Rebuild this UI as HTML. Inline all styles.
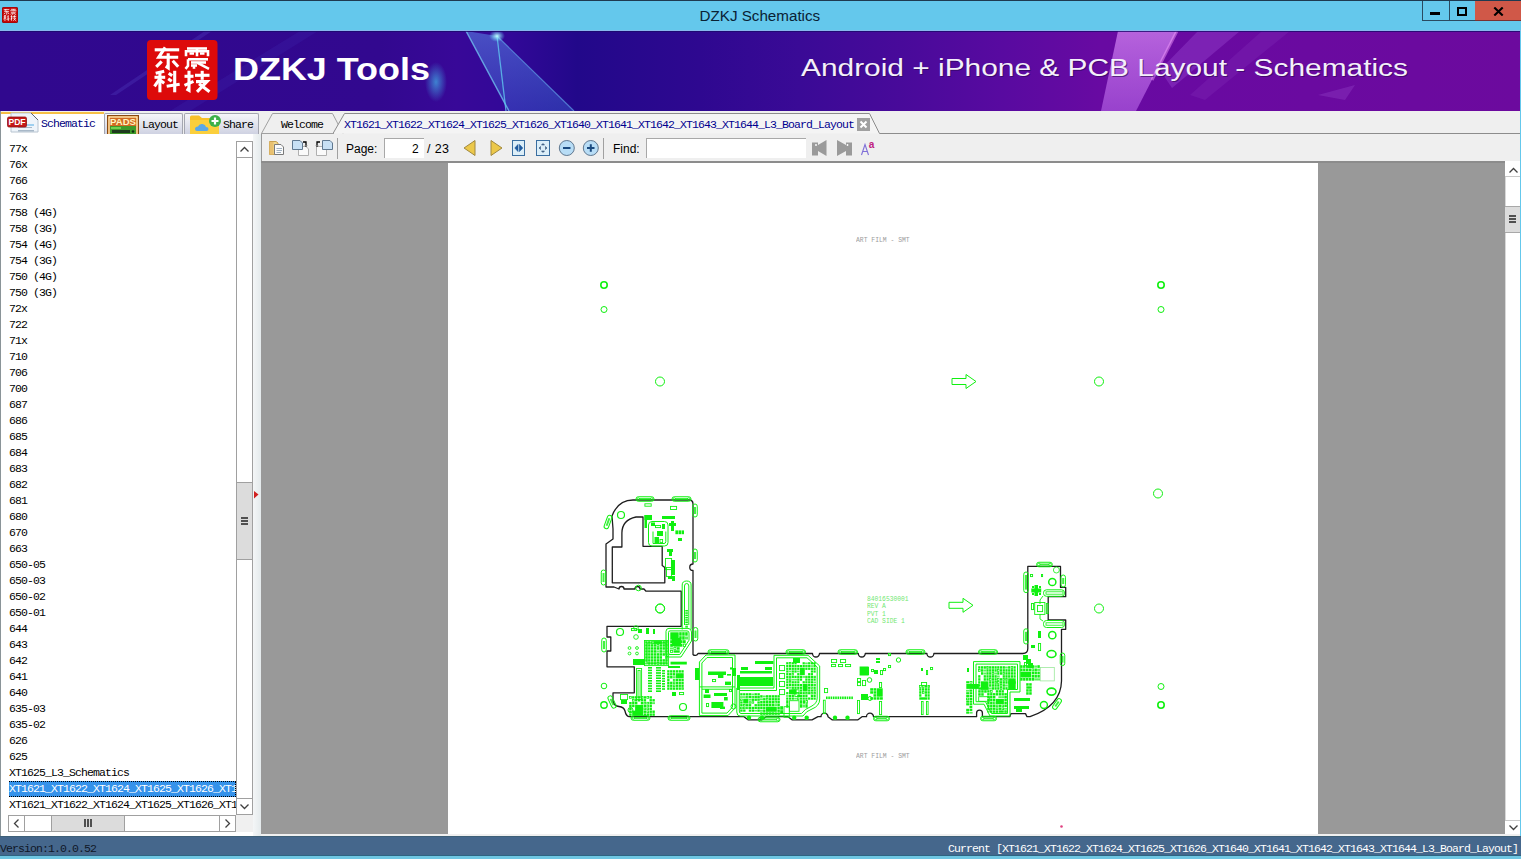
<!DOCTYPE html>
<html><head><meta charset="utf-8">
<style>
*{margin:0;padding:0;box-sizing:border-box}
html,body{width:1521px;height:859px;overflow:hidden;background:#f0f0f0;font-family:"Liberation Sans",sans-serif}
.a{position:absolute}
.mono{font-family:"Liberation Mono",monospace;font-size:11.5px;letter-spacing:-0.9px;white-space:pre;line-height:16px}
</style></head><body>
<!-- title bar -->
<div class="a" style="left:0;top:0;width:1521px;height:31px;background:#64c8ec;border-top:1px solid #1e3a50"></div>
<div class="a" style="left:699.5px;top:6.5px;font-size:15.2px;color:#0a2234;white-space:pre">DZKJ Schematics</div>
<div class="a" style="left:0;top:30px;width:1521px;height:1px;background:#88b8ee"></div>
<!-- app icon -->
<svg class="a" style="left:2px;top:7px" width="16" height="16" viewBox="147 40 70.5 60" preserveAspectRatio="none"><rect x="147" y="40" width="70.5" height="60" rx="10" fill="#c40a0a" stroke="#800000" stroke-width="3"/>
<g fill="none" stroke="#fff" stroke-width="3.1" stroke-linecap="butt" stroke-linejoin="miter">
<g transform="translate(153.7,47.3)">
<path d="M1 2.5 H25.5"/><path d="M11.5 0 L5 10 H24.5"/><path d="M14.5 6 V20.5 L12 18.8"/><path d="M8 14 L2.5 19.5"/><path d="M19 13.5 L24.5 19.5"/>
</g>
<g transform="translate(184,47.3)" stroke-width="2.6">
<path d="M3 1.2 H23"/><path d="M2 9 V4 H24 V9"/><path d="M13 1 V9"/><path d="M5.5 6.2 H10 M16 6.2 H20.5"/>
<path d="M4 12 H24"/><path d="M4 12 V18.5 L1.5 21.5"/><path d="M7 15.2 H22"/><path d="M7 18.2 H13"/><path d="M10 18 V21.5"/><path d="M13.5 15.5 L25 21.5"/>
</g>
<g transform="translate(153.7,70.8)">
<path d="M2 2.5 L10.5 0.5"/><path d="M0.8 6.5 H11.5"/><path d="M6.2 1.5 V21.5"/><path d="M6 8 L0.8 15.5"/><path d="M6.5 9.5 L10.5 12.5"/>
<path d="M15 2.5 L18.5 5"/><path d="M14.5 8 L18 10.5"/><path d="M13 15.5 L26 13.5"/><path d="M21 0 V21.5"/>
</g>
<g transform="translate(184,70.8)">
<path d="M0.5 5.5 H9.5"/><path d="M5 0 V19.5 L2.5 18"/><path d="M0.5 14.5 L9.5 10.5"/>
<path d="M11 4.5 H25.5"/><path d="M18.2 0 V9"/><path d="M12 10.8 H23 L13 21"/><path d="M15 13 L25.5 21"/>
</g>
</g>
</svg>
<!-- window buttons -->
<div class="a" style="left:1422px;top:1px;width:27px;height:20px;border:1px solid #2a4a60;border-top:none;border-right:none"></div>
<div class="a" style="left:1430px;top:12px;width:10px;height:3px;background:#000"></div>
<div class="a" style="left:1449px;top:1px;width:26px;height:20px;border:1px solid #2a4a60;border-top:none;border-right:none"></div>
<div class="a" style="left:1457px;top:7px;width:10px;height:9px;border:2px solid #000"></div>
<div class="a" style="left:1475px;top:1px;width:46px;height:20px;background:#d05848;border-bottom:1px solid #7a3030"></div>
<svg class="a" style="left:1493px;top:7px" width="11" height="9" viewBox="0 0 11 9"><path d="M1.3 0.5 L9.7 8.5 M9.7 0.5 L1.3 8.5" stroke="#000" stroke-width="2.1"/></svg>

<!-- banner -->
<svg id="banner" class="a" style="left:0;top:31px" width="1520" height="80" viewBox="0 31 1520 80">
<defs>
<linearGradient id="bg" x1="0" x2="1" y1="0" y2="0">
<stop offset="0" stop-color="#30088e"/><stop offset="0.25" stop-color="#32088f"/><stop offset="0.30" stop-color="#380898"/><stop offset="0.335" stop-color="#320898"/>
<stop offset="0.38" stop-color="#22088a"/><stop offset="0.46" stop-color="#2e0890"/>
<stop offset="0.526" stop-color="#3a0a96"/><stop offset="0.592" stop-color="#480a9a"/>
<stop offset="0.658" stop-color="#580aa0"/><stop offset="0.724" stop-color="#680aa2"/>
<stop offset="1" stop-color="#6c0a9e"/>
</linearGradient>
<linearGradient id="beam" x1="0" x2="0" y1="0" y2="1">
<stop offset="0" stop-color="#5a8ae8" stop-opacity="0.55"/><stop offset="1" stop-color="#3a60d0" stop-opacity="0.45"/>
</linearGradient>
<radialGradient id="glow"><stop offset="0" stop-color="#40a0e0" stop-opacity="0.8"/><stop offset="1" stop-color="#40a0e0" stop-opacity="0"/></radialGradient>
<radialGradient id="spark"><stop offset="0" stop-color="#c0ffff" stop-opacity="1"/><stop offset="1" stop-color="#60e0ff" stop-opacity="0"/></radialGradient>
</defs>
<rect x="0" y="31" width="1520" height="80" fill="url(#bg)"/>
<!-- faint diagonal streaks left -->
<path d="M110 95 L205 31 L212 31 L116 95Z" fill="#5a50d0" opacity="0.25"/>
<path d="M170 111 L300 31 L318 31 L190 111Z" fill="#4a40c8" opacity="0.15"/>
<!-- blue beam -->
<path d="M466 31 L497 36 L574 111 L509 111 Z" fill="url(#beam)"/>
<path d="M466 31 L509 111" stroke="#70c0f0" stroke-width="1.5" opacity="0.8"/>
<path d="M497 36 L574 111" stroke="#60a0e8" stroke-width="1.2" opacity="0.7"/>
<path d="M497 36 L506 111" stroke="#60c8f0" stroke-width="1.3" opacity="0.8"/>
<ellipse cx="497" cy="36" rx="8" ry="6" fill="url(#spark)"/>
<ellipse cx="436" cy="82" rx="11" ry="20" fill="url(#glow)"/>
<!-- violet beams right -->
<defs><linearGradient id="vb" x1="0" x2="0" y1="0" y2="1"><stop offset="0" stop-color="#d080f0" stop-opacity="0.75"/><stop offset="1" stop-color="#c070f0" stop-opacity="0.55"/></linearGradient></defs>
<path d="M1101 111 L1118 31 L1177 31 L1136 111Z" fill="url(#vb)"/>
<path d="M1177 31 L1152 80" stroke="#f8a0ff" stroke-width="3" opacity="0.45"/>
<path d="M1160 70 L1198 31 L1240 31 L1172 88Z" fill="#a050d8" opacity="0.35"/>
<path d="M1190 95 L1262 31 L1290 31 L1205 100Z" fill="#9040c8" opacity="0.2"/>
<path d="M1318 95 L1355 85 L1345 100Z" fill="#9a50d0" opacity="0.3"/>
<rect x="0" y="31" width="1520" height="1" fill="#1c0a6c" opacity="0.8"/>
<!-- logo -->
<rect x="147" y="40" width="70.5" height="60" rx="4" fill="#dd0a0a"/>
<g fill="none" stroke="#fff" stroke-width="3.1" stroke-linecap="butt" stroke-linejoin="miter">
<g transform="translate(153.7,47.3)">
<path d="M1 2.5 H25.5"/><path d="M11.5 0 L5 10 H24.5"/><path d="M14.5 6 V20.5 L12 18.8"/><path d="M8 14 L2.5 19.5"/><path d="M19 13.5 L24.5 19.5"/>
</g>
<g transform="translate(184,47.3)" stroke-width="2.6">
<path d="M3 1.2 H23"/><path d="M2 9 V4 H24 V9"/><path d="M13 1 V9"/><path d="M5.5 6.2 H10 M16 6.2 H20.5"/>
<path d="M4 12 H24"/><path d="M4 12 V18.5 L1.5 21.5"/><path d="M7 15.2 H22"/><path d="M7 18.2 H13"/><path d="M10 18 V21.5"/><path d="M13.5 15.5 L25 21.5"/>
</g>
<g transform="translate(153.7,70.8)">
<path d="M2 2.5 L10.5 0.5"/><path d="M0.8 6.5 H11.5"/><path d="M6.2 1.5 V21.5"/><path d="M6 8 L0.8 15.5"/><path d="M6.5 9.5 L10.5 12.5"/>
<path d="M15 2.5 L18.5 5"/><path d="M14.5 8 L18 10.5"/><path d="M13 15.5 L26 13.5"/><path d="M21 0 V21.5"/>
</g>
<g transform="translate(184,70.8)">
<path d="M0.5 5.5 H9.5"/><path d="M5 0 V19.5 L2.5 18"/><path d="M0.5 14.5 L9.5 10.5"/>
<path d="M11 4.5 H25.5"/><path d="M18.2 0 V9"/><path d="M12 10.8 H23 L13 21"/><path d="M15 13 L25.5 21"/>
</g>
</g>
<text x="233" y="79.6" font-family="Liberation Sans" font-weight="bold" font-size="32" textLength="197" lengthAdjust="spacingAndGlyphs" fill="#fff">DZKJ Tools</text>
<text x="801" y="75.7" font-family="Liberation Sans" font-size="23" textLength="607" lengthAdjust="spacingAndGlyphs" fill="#2a0850" opacity="0.6" transform="translate(1,1)">Android + iPhone &amp; PCB Layout - Schematics</text>
<text x="801" y="75.7" font-family="Liberation Sans" font-size="23" textLength="607" lengthAdjust="spacingAndGlyphs" fill="#f4f0fa">Android + iPhone &amp; PCB Layout - Schematics</text>
</svg>
<div class="a" style="left:1520px;top:31px;width:1px;height:805px;background:#64c8ec"></div>

<!-- tab strip -->
<div class="a" style="left:0;top:111px;width:1520px;height:23px;background:#efefef"></div>


<!-- left tabs -->
<div class="a" style="left:1px;top:112px;width:103px;height:24px;background:#fff"></div>
<div class="a" style="left:1px;top:112px;width:103px;height:2px;background:#f6bf45"></div>
<div class="a" style="left:104px;top:113px;width:79px;height:21px;background:linear-gradient(#f6f6f9,#cfd2e2);border:1px solid #a4a6b0;border-bottom:none;border-radius:2px 2px 0 0"></div>
<div class="a" style="left:184px;top:113px;width:75px;height:21px;background:linear-gradient(#f6f6f9,#cfd2e2);border:1px solid #a4a6b0;border-bottom:none;border-radius:2px 2px 0 0"></div>
<div class="a mono" style="left:41px;top:116px;color:#000080">Schematic</div>
<div class="a mono" style="left:142px;top:117px;color:#000">Layout</div>
<div class="a mono" style="left:223px;top:117px;color:#000">Share</div>
<!-- pdf icon -->
<svg class="a" style="left:6px;top:112px" width="34" height="22" viewBox="0 0 34 22">
<path d="M5 1 H25 L32 8 V20 H5 Z" fill="#eef4fa" stroke="#b8c4d0" stroke-width="1"/>
<path d="M25 1 L32 8" stroke="#606870" stroke-width="1"/>
<rect x="12" y="12" width="16" height="2" fill="#9fd0f0"/><rect x="12" y="15" width="14" height="1" fill="#a8b8c8"/><rect x="12" y="18" width="16" height="1.5" fill="#a8b8c8"/>
<rect x="1.5" y="5" width="19" height="10" rx="1.5" fill="#c41818" stroke="#901010" stroke-width="0.8"/>
<text x="11" y="13.3" font-family="Liberation Sans" font-weight="bold" font-size="8.6" fill="#fff" text-anchor="middle">PDF</text>
</svg>
<!-- pads icon -->
<svg class="a" style="left:107px;top:115px" width="32" height="19" viewBox="0 0 32 19">
<rect x="0.5" y="0.5" width="31" height="19" fill="#d26a22" stroke="#8a4a10"/>
<rect x="2" y="2" width="28" height="18" fill="none" stroke="#fff2b8" stroke-width="1.3"/>
<text x="16" y="10" font-family="Liberation Sans" font-weight="bold" font-size="9.6" fill="#fff4c0" text-anchor="middle">PADS</text>
<rect x="3" y="11" width="26" height="8" fill="#3e9a2a"/><rect x="4" y="12" width="10" height="2" fill="#70d050"/><rect x="5" y="15" width="18" height="3" fill="#1e3a1e"/><circle cx="26" cy="16.5" r="1.3" fill="#103010"/>
</svg>
<!-- share icon -->
<svg class="a" style="left:189px;top:114px" width="34" height="20" viewBox="0 0 34 20">
<path d="M1 3 Q1 1.5 2.5 1.5 H10 L13 4 H30 V20 H1 Z" fill="#f8c028"/>
<path d="M1 6 H30 V20 H1 Z" fill="#fbcf3c"/>
<path d="M8 17 Q6 17 6 15 Q6 12.5 9 12.5 Q10 9.5 13.5 10 Q16.5 10.5 17 13 Q19.5 13 19.5 15 Q19.5 17 17.5 17 Z" fill="#5aa8e8"/>
<circle cx="26" cy="7" r="6" fill="#3cb048"/>
<path d="M26 3.5 V10.5 M22.5 7 H29.5" stroke="#fff" stroke-width="2.2"/>
</svg>
<!-- doc tabs -->
<svg class="a" style="left:261px;top:111px" width="1260" height="24" viewBox="0 0 1260 24">
<path d="M0.5 22.5 L11.5 2.5 H71.5 L82 22.5" fill="#efefef" stroke="#a0a0a0"/>
<path d="M72 22.5 L83.5 2.5 H608.5 L618.5 22.5 H1259" fill="#f4f4f4" stroke="#8c8c8c"/>
<path d="M0 22.5 H73" stroke="#a0a0a0"/>
</svg>
<div class="a mono" style="left:281px;top:117px;color:#000">Welcome</div>
<div class="a mono" style="left:344px;top:117px;color:#000090">XT1621_XT1622_XT1624_XT1625_XT1626_XT1640_XT1641_XT1642_XT1643_XT1644_L3_Board_Layout</div>
<div class="a" style="left:857px;top:118px;width:13px;height:13px;background:#a0a0a0"></div>
<svg class="a" style="left:857px;top:118px" width="13" height="13"><path d="M3.5 3.5 L9.5 9.5 M9.5 3.5 L3.5 9.5" stroke="#fff" stroke-width="2"/></svg>

<!-- left panel -->
<div class="a" style="left:0;top:134px;width:261px;height:702px;background:#fff;border-left:1px solid #8a9498"></div>


<!-- list -->
<div class="a mono" style="left:9px;top:141px;width:227px;height:674px;overflow:hidden;color:#000">77x
76x
766
763
758 (4G)
758 (3G)
754 (4G)
754 (3G)
750 (4G)
750 (3G)
72x
722
71x
710
706
700
687
686
685
684
683
682
681
680
670
663
650-05
650-03
650-02
650-01
644
643
642
641
640
635-03
635-02
626
625
XT1625_L3_Schematics
<span style="display:block;position:relative;left:-1px;width:228px;height:16px;background:#3592ea;color:#fff;outline:1px dotted #000;outline-offset:-1px;padding-left:1px">XT1621_XT1622_XT1624_XT1625_XT1626_XT1640</span>XT1621_XT1622_XT1624_XT1625_XT1626_XT1640</div>
<!-- vscroll left -->
<div class="a" style="left:236px;top:141px;width:17px;height:674px;background:#fff;border-left:1px solid #a0a0a0;border-right:1px solid #a0a0a0"></div>
<div class="a" style="left:236px;top:141px;width:17px;height:17px;background:#fff;border:1px solid #a0a0a0"></div>
<svg class="a" style="left:239px;top:145px" width="11" height="9"><path d="M1.5 6.5 L5.5 2.5 L9.5 6.5" fill="none" stroke="#404040" stroke-width="1.3"/></svg>
<div class="a" style="left:236px;top:798px;width:17px;height:17px;background:#fff;border:1px solid #a0a0a0"></div>
<svg class="a" style="left:239px;top:802px" width="11" height="9"><path d="M1.5 2.5 L5.5 6.5 L9.5 2.5" fill="none" stroke="#404040" stroke-width="1.3"/></svg>
<div class="a" style="left:236px;top:482px;width:17px;height:78px;background:#dcdcdc;border:1px solid #a0a0a0"></div>
<div class="a" style="left:241px;top:517px;width:7px;height:2px;background:#505050;box-shadow:0 3px 0 #505050,0 6px 0 #505050"></div>
<!-- hscroll left -->
<div class="a" style="left:8px;top:815px;width:228px;height:17px;background:#fff;border:1px solid #a0a0a0"></div>
<div class="a" style="left:8px;top:815px;width:17px;height:17px;background:#fff;border:1px solid #a0a0a0"></div>
<svg class="a" style="left:12px;top:818px" width="9" height="11"><path d="M6.5 1.5 L2.5 5.5 L6.5 9.5" fill="none" stroke="#404040" stroke-width="1.3"/></svg>
<div class="a" style="left:219px;top:815px;width:17px;height:17px;background:#fff;border:1px solid #a0a0a0"></div>
<svg class="a" style="left:223px;top:818px" width="9" height="11"><path d="M2.5 1.5 L6.5 5.5 L2.5 9.5" fill="none" stroke="#404040" stroke-width="1.3"/></svg>
<div class="a" style="left:51px;top:815px;width:74px;height:17px;background:#dcdcdc;border:1px solid #a0a0a0"></div>
<div class="a" style="left:84px;top:819px;width:2px;height:8px;background:#505050;box-shadow:3px 0 0 #505050,6px 0 0 #505050"></div>
<div class="a" style="left:236px;top:815px;width:17px;height:17px;background:#f0f0f0"></div>
<!-- splitter -->
<div class="a" style="left:253px;top:134px;width:8px;height:702px;background:linear-gradient(90deg,#f4f6f7,#e4eaec)"></div>
<svg class="a" style="left:254px;top:491px" width="5" height="8"><path d="M0 0 L4.5 3.5 L0 7.5Z" fill="#d02020"/></svg>

<!-- toolbar -->
<div class="a" style="left:261px;top:134px;width:1259px;height:27px;background:#efefef;border-left:1px solid #9a9a9a"></div>


<!-- toolbar items -->
<svg class="a" style="left:266px;top:138px" width="340" height="22" viewBox="266 138 340 22">
<!-- icon1 folder+doc -->
<path d="M269.5 141.5 H276 L278 143 V154.5 H269.5 Z" fill="#f0d890" stroke="#c8a050"/>
<rect x="269.5" y="142" width="4" height="12.5" fill="#e8c070"/>
<path d="M274.5 144.5 H281 L283.5 147 V154.5 H274.5 Z" fill="#fbfbfb" stroke="#7a7a7a"/>
<path d="M276.5 148.5 H282 M276.5 150.5 H282 M276.5 152.5 H281" stroke="#7890a8" stroke-width="0.7"/>
<!-- icon2 -->
<path d="M298.5 146.5 H306 L308.5 149 V155.5 H298.5 Z" fill="#fafafa" stroke="#b0b0b0"/>
<path d="M292.5 140.5 H300 L302.5 143 V149.5 H292.5 Z" fill="#c8e0f4" stroke="#607890"/>
<path d="M303 142 H306 V145" fill="none" stroke="#000" stroke-width="1.3"/><path d="M304.5 145.5 L306 147 L307.5 145.5Z" fill="#000"/>
<!-- icon3 -->
<path d="M316.5 146.5 H324 L326.5 149 V155.5 H316.5 Z" fill="#fafafa" stroke="#b0b0b0"/>
<path d="M322.5 140.5 H330 L332.5 143 V149.5 H322.5 Z" fill="#c8e0f4" stroke="#607890"/>
<path d="M320 142 H317 V145" fill="none" stroke="#000" stroke-width="1.3"/><path d="M315.5 145.5 L317 147 L318.5 145.5Z" fill="#000"/>
<path d="M337.5 138 V159" stroke="#a0a0a0"/>
<!-- nav arrows -->
<path d="M475 140.5 V155.5 L464 148 Z" fill="#ecc84a" stroke="#a08840" stroke-linejoin="round"/>
<path d="M491 140.5 V155.5 L502 148 Z" fill="#ecc84a" stroke="#a08840" stroke-linejoin="round"/>
<!-- fit width -->
<rect x="512.5" y="140.5" width="12" height="15" fill="#dceef8" stroke="#3a6ea0"/>
<path d="M518 144.5 L514.8 148 L518 151.5Z M519.5 144.5 L522.7 148 L519.5 151.5Z" fill="#1f5a9e" stroke="#1f5a9e" stroke-width="0.7"/>
<!-- fit page -->
<rect x="536.5" y="140.5" width="13" height="15" fill="#dceef8" stroke="#3a6ea0"/>
<path d="M543 143.5 L541.5 145 H544.5Z M543 152.5 L541.5 151 H544.5Z M539 148 L540.5 146.5 V149.5Z M547 148 L545.5 146.5 V149.5Z" fill="#3a5a80" stroke="#3a5a80" stroke-width="0.6"/>
<!-- zoom out -->
<circle cx="566.8" cy="148" r="7.5" fill="#b8ddf6" stroke="#607890" stroke-width="1"/>
<path d="M563 148 H570.5" stroke="#1a4a80" stroke-width="2"/>
<circle cx="590.8" cy="148" r="7.5" fill="#b8ddf6" stroke="#607890" stroke-width="1"/>
<path d="M587 148 H594.5 M590.8 144.2 V151.8" stroke="#1a4a80" stroke-width="2"/>
<path d="M603.5 138 V159" stroke="#a0a0a0"/>
</svg>
<div class="a" style="left:346px;top:142px;font-size:12px;color:#000;white-space:pre">Page:</div>
<div class="a" style="left:384px;top:138px;width:40px;height:20px;background:#fff;border-left:1px solid #a8a8a8;border-top:1px solid #a8a8a8"></div>
<div class="a" style="left:412px;top:142px;font-size:12px;color:#000;white-space:pre">2</div>
<div class="a" style="left:427px;top:142px;font-size:12.5px;letter-spacing:0.4px;color:#000;white-space:pre">/ 23</div>
<div class="a" style="left:613px;top:142px;font-size:12px;color:#000;white-space:pre">Find:</div>
<div class="a" style="left:646px;top:138px;width:160px;height:20px;background:#fff;border-left:1px solid #a8a8a8;border-top:1px solid #a8a8a8"></div>
<svg class="a" style="left:810px;top:138px" width="70" height="22" viewBox="810 138 70 22">
<path d="M812 142.5 H818 V145 L826.5 140 V156 L818 151 V155.5 H812 Z" fill="#9a9a9a"/><circle cx="816" cy="145" r="0.9" fill="#fff"/>
<path d="M837 140 L846 145 V142.5 H852 V155.5 H846 V151 L837 156 Z" fill="#9a9a9a"/><circle cx="847.5" cy="145" r="0.9" fill="#fff"/>
<path d="M861.5 155 L865 144.5 L868.5 155 M862.7 151.5 H867.3" fill="none" stroke="#8070d8" stroke-width="1.1"/>
<text x="871.5" y="148" font-family="Liberation Sans" font-weight="bold" font-size="10" fill="#c02080" text-anchor="middle">a</text>
</svg>

<!-- doc area -->
<div class="a" style="left:261px;top:161px;width:1244px;height:673px;background:#999;border-top:2px solid #8c8c8c"></div>
<div class="a" style="left:448px;top:163px;width:870px;height:671px;background:#fff"></div>
<!--PCB--><svg class="a" style="left:448px;top:163px" width="870" height="671" viewBox="448 163 870 671"><circle cx="604" cy="285" r="3.2" fill="none" stroke="#10f010" stroke-width="1.6"/><circle cx="604" cy="309.5" r="3.0" fill="none" stroke="#10f010" stroke-width="1.0"/><circle cx="660" cy="381.5" r="4.5" fill="none" stroke="#10f010" stroke-width="1.0"/><circle cx="1161" cy="285" r="3.2" fill="none" stroke="#10f010" stroke-width="1.6"/><circle cx="1161" cy="309.5" r="3.0" fill="none" stroke="#10f010" stroke-width="1.0"/><circle cx="1099" cy="381.5" r="4.5" fill="none" stroke="#10f010" stroke-width="1.0"/><circle cx="1158" cy="493.5" r="4.5" fill="none" stroke="#10f010" stroke-width="1.0"/><circle cx="660" cy="608.5" r="4.5" fill="none" stroke="#10f010" stroke-width="1.0"/><circle cx="1099" cy="608.5" r="4.5" fill="none" stroke="#10f010" stroke-width="1.0"/><circle cx="1161" cy="686.5" r="3.0" fill="none" stroke="#10f010" stroke-width="1.0"/><circle cx="1161" cy="705" r="3.2" fill="none" stroke="#10f010" stroke-width="1.6"/><path d="M952 378.5 H966 V374.5 L976 381.5 L966 388.5 V384.5 H952 Z" fill="none" stroke="#10f010" stroke-width="1.0" stroke-linejoin="round"/><path d="M949 602.3 H963 V598.3 L973 605.3 L963 612.3 V608.3 H949 Z" fill="none" stroke="#10f010" stroke-width="1.0" stroke-linejoin="round"/><path d="M633 500 H689 Q693 500 693 504 V564 A3.2 3.2 0 0 0 693 570.5 V654.5 A3 3 0 0 0 698 653.5 H812.5 A3.5 3.5 0 0 0 819.5 653.5 H858.3 A3.5 3.5 0 0 0 865.3 653.5 H926.9 A3.5 3.5 0 0 0 933.9 653.5 H1022.8 Q1027.8 653.5 1027.8 648.5 V566.4 H1060.5 V587.4 H1065.7 V596.7 H1048.2 V620 H1065.7 V629.3 H1061.5 V681 Q1061 706 1030 716.7 H1027 L1025.5 713.6 H1011 L1009.8 716.7 H982.4 V713 A2.9 2.9 0 0 0 976.6 713 V716.7 H950 L940 716.7 H873.5 A3.5 3.5 0 0 0 866.5 716.7 L862 716.7 L858 719.8 H832 L828 716.7 A3.5 3.5 0 0 0 821 716.7 L818 716.7 L812 719.8 H792 L788 716.7 H766 L762 719.8 H748 L744 716.7 H629 Q626 716 625 711 Q624 707 619 706.5 Q614 706 613 701 V692.8 H634.3 V666.8 H607 V651 H610.8 V637 H607 V626.3 H681.2 V591.2 H646 L644 589 H640 A2.5 2.5 0 0 0 635 589 H624 A2.5 2.5 0 0 0 619 589 L614 587 H606 V544 L613 539 V529 L612 516 Q618 500 633 500 Z" fill="none" stroke="#1e1e1e" stroke-width="1.3" stroke-linejoin="round"/><path d="M612.3 547 H621.9 V533 Q622 520 636 517 H643 V546.3 H662.2 V565.5 L664.8 567.5 V582.8 H612.3 Z" fill="none" stroke="#1e1e1e" stroke-width="1.3" stroke-linejoin="round"/><rect x="636" y="496.75" width="18" height="4.5" rx="2.25" fill="none" stroke="#10f010" stroke-width="1"/><rect x="639" y="498" width="12" height="2" fill="#10f010" opacity="0.8"/><circle cx="638.25" cy="499" r="1.2375" fill="none" stroke="#10f010" stroke-width="0.8"/><circle cx="651.75" cy="499" r="1.2375" fill="none" stroke="#10f010" stroke-width="0.8"/><rect x="672" y="496.75" width="19" height="4.5" rx="2.25" fill="none" stroke="#10f010" stroke-width="1"/><rect x="675" y="498" width="13" height="2" fill="#10f010" opacity="0.8"/><circle cx="674.25" cy="499" r="1.2375" fill="none" stroke="#10f010" stroke-width="0.8"/><circle cx="688.75" cy="499" r="1.2375" fill="none" stroke="#10f010" stroke-width="0.8"/><g transform="translate(608,522) rotate(20)"><rect x="-2.25" y="-7.0" width="4.5" height="14" rx="2.25" fill="none" stroke="#10f010" stroke-width="1"/><rect x="-1" y="-4.0" width="2" height="8" fill="#10f010" opacity="0.8"/></g><rect x="601.25" y="570" width="4.5" height="15" rx="2.25" fill="none" stroke="#10f010" stroke-width="1"/><rect x="602.5" y="573" width="2" height="9" fill="#10f010" opacity="0.8"/><rect x="692.75" y="504" width="4.5" height="13" rx="2.25" fill="none" stroke="#10f010" stroke-width="1"/><rect x="694" y="507" width="2" height="7" fill="#10f010" opacity="0.8"/><rect x="692.75" y="549" width="4.5" height="13" rx="2.25" fill="none" stroke="#10f010" stroke-width="1"/><rect x="694" y="552" width="2" height="7" fill="#10f010" opacity="0.8"/><rect x="601.75" y="638" width="4.5" height="14" rx="2.25" fill="none" stroke="#10f010" stroke-width="1"/><rect x="603" y="641" width="2" height="8" fill="#10f010" opacity="0.8"/><g transform="translate(612,702) rotate(-25)"><rect x="-2.25" y="-6.5" width="4.5" height="13" rx="2.25" fill="none" stroke="#10f010" stroke-width="1"/><rect x="-1" y="-3.5" width="2" height="7" fill="#10f010" opacity="0.8"/></g><rect x="631" y="715.75" width="19" height="4.5" rx="2.25" fill="none" stroke="#10f010" stroke-width="1"/><rect x="634" y="717" width="13" height="2" fill="#10f010" opacity="0.8"/><circle cx="633.25" cy="718" r="1.2375" fill="none" stroke="#10f010" stroke-width="0.8"/><circle cx="647.75" cy="718" r="1.2375" fill="none" stroke="#10f010" stroke-width="0.8"/><rect x="668" y="715.75" width="22" height="4.5" rx="2.25" fill="none" stroke="#10f010" stroke-width="1"/><rect x="671" y="717" width="16" height="2" fill="#10f010" opacity="0.8"/><circle cx="670.25" cy="718" r="1.2375" fill="none" stroke="#10f010" stroke-width="0.8"/><circle cx="687.75" cy="718" r="1.2375" fill="none" stroke="#10f010" stroke-width="0.8"/><rect x="708" y="649.75" width="21" height="4.5" rx="2.25" fill="none" stroke="#10f010" stroke-width="1"/><rect x="711" y="651" width="15" height="2" fill="#10f010" opacity="0.8"/><circle cx="710.25" cy="652" r="1.2375" fill="none" stroke="#10f010" stroke-width="0.8"/><circle cx="726.75" cy="652" r="1.2375" fill="none" stroke="#10f010" stroke-width="0.8"/><rect x="786" y="649.75" width="19.5" height="4.5" rx="2.25" fill="none" stroke="#10f010" stroke-width="1"/><rect x="789" y="651" width="13.5" height="2" fill="#10f010" opacity="0.8"/><circle cx="788.25" cy="652" r="1.2375" fill="none" stroke="#10f010" stroke-width="0.8"/><circle cx="803.25" cy="652" r="1.2375" fill="none" stroke="#10f010" stroke-width="0.8"/><rect x="838" y="649.75" width="19.5" height="4.5" rx="2.25" fill="none" stroke="#10f010" stroke-width="1"/><rect x="841" y="651" width="13.5" height="2" fill="#10f010" opacity="0.8"/><circle cx="840.25" cy="652" r="1.2375" fill="none" stroke="#10f010" stroke-width="0.8"/><circle cx="855.25" cy="652" r="1.2375" fill="none" stroke="#10f010" stroke-width="0.8"/><rect x="906" y="649.75" width="19" height="4.5" rx="2.25" fill="none" stroke="#10f010" stroke-width="1"/><rect x="909" y="651" width="13" height="2" fill="#10f010" opacity="0.8"/><circle cx="908.25" cy="652" r="1.2375" fill="none" stroke="#10f010" stroke-width="0.8"/><circle cx="922.75" cy="652" r="1.2375" fill="none" stroke="#10f010" stroke-width="0.8"/><rect x="978.5" y="649.75" width="19.0" height="4.5" rx="2.25" fill="none" stroke="#10f010" stroke-width="1"/><rect x="981.5" y="651" width="13.0" height="2" fill="#10f010" opacity="0.8"/><circle cx="980.75" cy="652" r="1.2375" fill="none" stroke="#10f010" stroke-width="0.8"/><circle cx="995.25" cy="652" r="1.2375" fill="none" stroke="#10f010" stroke-width="0.8"/><rect x="758" y="717.25" width="22" height="4.5" rx="2.25" fill="none" stroke="#10f010" stroke-width="1"/><rect x="761" y="718.5" width="16" height="2" fill="#10f010" opacity="0.8"/><circle cx="760.25" cy="719.5" r="1.2375" fill="none" stroke="#10f010" stroke-width="0.8"/><circle cx="777.75" cy="719.5" r="1.2375" fill="none" stroke="#10f010" stroke-width="0.8"/><rect x="873.5" y="716.25" width="16.0" height="4.5" rx="2.25" fill="none" stroke="#10f010" stroke-width="1"/><rect x="876.5" y="717.5" width="10.0" height="2" fill="#10f010" opacity="0.8"/><circle cx="875.75" cy="718.5" r="1.2375" fill="none" stroke="#10f010" stroke-width="0.8"/><circle cx="887.25" cy="718.5" r="1.2375" fill="none" stroke="#10f010" stroke-width="0.8"/><rect x="980.5" y="716.25" width="16.0" height="4.5" rx="2.25" fill="none" stroke="#10f010" stroke-width="1"/><rect x="983.5" y="717.5" width="10.0" height="2" fill="#10f010" opacity="0.8"/><circle cx="982.75" cy="718.5" r="1.2375" fill="none" stroke="#10f010" stroke-width="0.8"/><circle cx="994.25" cy="718.5" r="1.2375" fill="none" stroke="#10f010" stroke-width="0.8"/><rect x="1036.6" y="562.25" width="15.700000000000045" height="4.5" rx="2.25" fill="none" stroke="#10f010" stroke-width="1"/><rect x="1039.6" y="563.5" width="9.700000000000045" height="2" fill="#10f010" opacity="0.8"/><circle cx="1038.85" cy="564.5" r="1.2375" fill="none" stroke="#10f010" stroke-width="0.8"/><circle cx="1050.05" cy="564.5" r="1.2375" fill="none" stroke="#10f010" stroke-width="0.8"/><rect x="1023.75" y="572" width="4.5" height="20.600000000000023" rx="2.25" fill="none" stroke="#10f010" stroke-width="1"/><rect x="1025" y="575" width="2" height="14.600000000000023" fill="#10f010" opacity="0.8"/><rect x="1023.75" y="628.8" width="4.5" height="15.200000000000045" rx="2.25" fill="none" stroke="#10f010" stroke-width="1"/><rect x="1025" y="631.8" width="2" height="9.200000000000045" fill="#10f010" opacity="0.8"/><rect x="1060.95" y="575" width="4.5" height="12" rx="2.25" fill="none" stroke="#10f010" stroke-width="1"/><rect x="1062.2" y="578" width="2" height="6" fill="#10f010" opacity="0.8"/><rect x="1060.25" y="653" width="4.5" height="12.600000000000023" rx="2.25" fill="none" stroke="#10f010" stroke-width="1"/><rect x="1061.5" y="656" width="2" height="6.600000000000023" fill="#10f010" opacity="0.8"/><g transform="translate(1057,704) rotate(35)"><rect x="-2.25" y="-6.0" width="4.5" height="12" rx="2.25" fill="none" stroke="#10f010" stroke-width="1"/><rect x="-1" y="-3.0" width="2" height="6" fill="#10f010" opacity="0.8"/></g><circle cx="749" cy="717.8" r="2.2" fill="#10f010"/><circle cx="762" cy="717.8" r="2.2" fill="#10f010"/><circle cx="794.2" cy="717.8" r="2.2" fill="#10f010"/><circle cx="806.7" cy="717.8" r="2.2" fill="#10f010"/><circle cx="835" cy="717.8" r="2.2" fill="#10f010"/><circle cx="847.5" cy="717.8" r="2.2" fill="#10f010"/><path d="M652 521.5 H664.5 Q668 521.5 668 525 V542.5 Q668 546 664.5 546 H652 Q648.5 546 648.5 542.5 V525 Q648.5 521.5 652 521.5 Z" fill="none" stroke="#10f010" stroke-width="1.0" stroke-linejoin="round"/><path d="M653 531.5 V543.5 H664 Q665.8 543.5 665.8 541.5 V531.5" fill="none" stroke="#10f010" stroke-width="1.0" stroke-linejoin="round"/><path d="M682.2 629.5 V585 Q682.2 581 686.6 581 Q691.1 581 691.1 585 V629.5" fill="none" stroke="#10f010" stroke-width="1.0" stroke-linejoin="round"/><path d="M684.5 625 V586 Q684.5 583.5 686.7 583.5 Q688.8 583.5 688.8 586 V625" fill="none" stroke="#10f010" stroke-width="1.0" stroke-linejoin="round"/><path d="M669 628.4 H688 Q691.5 628.4 691.5 632 V641 L681 657 H669 Q666 657 666 654 V631.4 Q666 628.4 669 628.4 Z" fill="none" stroke="#10f010" stroke-width="1.0" stroke-linejoin="round"/><path d="M670 630.9 H687 Q689 630.9 689 633 V640.2 L679.8 654.5 H670 Q668.5 654.5 668.5 653 V632.4 Q668.5 630.9 670 630.9 Z" fill="none" stroke="#10f010" stroke-width="1.0" stroke-linejoin="round"/><rect x="693.25" y="627.5" width="4.5" height="13.5" rx="2.25" fill="none" stroke="#10f010" stroke-width="1"/><rect x="694.5" y="630.5" width="2" height="7.5" fill="#10f010" opacity="0.8"/><path d="M699.4 662 L706 655 H735 V708 L728 715.6 H699.4 Z" fill="none" stroke="#10f010" stroke-width="1.0" stroke-linejoin="round"/><path d="M701.9 663 L707 657.5 H732.5 V707 L727 713.1 H701.9 Z" fill="none" stroke="#10f010" stroke-width="1.0" stroke-linejoin="round"/><path d="M699.4 686.9 H735" fill="none" stroke="#10f010" stroke-width="1.0" stroke-linejoin="round"/><path d="M701.9 689.2 H732.5" fill="none" stroke="#10f010" stroke-width="1.0" stroke-linejoin="round"/><path d="M736.8 688 H774 V655.3 H808 L819.7 666 V699 Q819.7 706 812 709 Q806 711 803 716 H740 Q736.8 716 736.8 712 Z" fill="none" stroke="#10f010" stroke-width="1.0" stroke-linejoin="round"/><path d="M739.3 690.5 H776.5 V657.8 H807 L817.2 667 V698 Q817.2 703.5 811 706.5 Q804.5 709 801.5 713.5 H741 Q739.3 713.5 739.3 711 Z" fill="none" stroke="#10f010" stroke-width="1.0" stroke-linejoin="round"/><path d="M973.5 661.6 H1020 V692 H1010 V716 H990 L984 704.2 H973.5 Z" fill="none" stroke="#10f010" stroke-width="1.0" stroke-linejoin="round"/><path d="M976 664.1 H1017.5 V689.5 H1007.5 V713.5 H991.5 L985.5 701.7 H976 Z" fill="none" stroke="#10f010" stroke-width="1.0" stroke-linejoin="round"/><rect x="1040.3" y="667.4" width="14" height="13.5" fill="none" stroke="#9be89b" stroke-width="0.8"/><circle cx="621" cy="515" r="3.5" fill="none" stroke="#10f010" stroke-width="1.2"/><circle cx="638.5" cy="588" r="2.8" fill="none" stroke="#10f010" stroke-width="1.0"/><circle cx="620" cy="632" r="3.5" fill="none" stroke="#10f010" stroke-width="1.2"/><circle cx="636" cy="628" r="2.3" fill="none" stroke="#10f010" stroke-width="0.9"/><circle cx="636" cy="637" r="2.3" fill="none" stroke="#10f010" stroke-width="0.9"/><circle cx="629.5" cy="648" r="1.4" fill="none" stroke="#10f010" stroke-width="0.9"/><circle cx="637" cy="648" r="1.4" fill="none" stroke="#10f010" stroke-width="0.9"/><circle cx="629.5" cy="653.5" r="1.4" fill="none" stroke="#10f010" stroke-width="0.9"/><circle cx="637" cy="653.5" r="1.4" fill="none" stroke="#10f010" stroke-width="0.9"/><circle cx="604" cy="686" r="2.8" fill="none" stroke="#10f010" stroke-width="1.0"/><circle cx="604" cy="705" r="3.2" fill="none" stroke="#10f010" stroke-width="1.4"/><circle cx="630.5" cy="710" r="2.5" fill="none" stroke="#10f010" stroke-width="1.0"/><circle cx="683" cy="707" r="3.5" fill="none" stroke="#10f010" stroke-width="1.2"/><circle cx="660.2" cy="608.5" r="4.5" fill="none" stroke="#10f010" stroke-width="1.0"/><circle cx="733.5" cy="706.5" r="2.5" fill="none" stroke="#10f010" stroke-width="1.0"/><circle cx="898.5" cy="660" r="2.2" fill="none" stroke="#10f010" stroke-width="1.0"/><circle cx="869.5" cy="680" r="2.3" fill="none" stroke="#10f010" stroke-width="1.0"/><circle cx="870" cy="698.5" r="2.0" fill="none" stroke="#10f010" stroke-width="1.0"/><ellipse cx="1051.5" cy="654" rx="4.5" ry="3.5" fill="none" stroke="#10f010" stroke-width="1.6"/><ellipse cx="1051.5" cy="691.6" rx="4.5" ry="3.5" fill="none" stroke="#10f010" stroke-width="1.6"/><circle cx="1043.9" cy="705" r="3.5" fill="none" stroke="#10f010" stroke-width="1.4"/><circle cx="1052.3" cy="582" r="3.6" fill="none" stroke="#10f010" stroke-width="1.5"/><circle cx="1052.3" cy="635.2" r="3.6" fill="none" stroke="#10f010" stroke-width="1.5"/><circle cx="1056.4" cy="570" r="3.0" fill="none" stroke="#10f010" stroke-width="0.8"/><rect x="644.9" y="503.8" width="6.3" height="2.4" fill="none" stroke="#10f010" stroke-width="0.9"/><rect x="670.5" y="506.4" width="6.1" height="3.1" fill="none" stroke="#10f010" stroke-width="0.9"/><rect x="644.5" y="515.0" width="7.5" height="5.0" fill="#10f010"/><rect x="644.5" y="515.0" width="2.5" height="13.0" fill="#10f010"/><rect x="662.0" y="516.0" width="13.0" height="3.0" fill="#10f010"/><rect x="669.0" y="523.0" width="7.0" height="3.0" fill="#10f010"/><rect x="671.0" y="521.0" width="3.0" height="10.0" fill="#10f010"/><rect x="675.4" y="530.4" width="2.6" height="3.8" fill="#10f010"/><rect x="678.5" y="530.4" width="2.5" height="3.8" fill="#10f010"/><rect x="681.5" y="530.4" width="2.5" height="3.8" fill="#10f010"/><rect x="678.0" y="538.0" width="4.0" height="3.0" fill="#10f010"/><rect x="651.0" y="522.5" width="4.0" height="3.5" fill="#10f010"/><rect x="655.5" y="525.5" width="5.1" height="2.1" fill="none" stroke="#10f010" stroke-width="0.9"/><rect x="657.0" y="531.0" width="6.0" height="5.0" fill="#10f010"/><rect x="654.5" y="537.0" width="4.5" height="6.0" fill="#10f010"/><rect x="660.0" y="539.5" width="2.6" height="3.1" fill="none" stroke="#10f010" stroke-width="0.9"/><rect x="662.0" y="524.0" width="3.0" height="5.0" fill="#10f010"/><rect x="667.0" y="549.0" width="6.0" height="3.0" fill="#10f010"/><rect x="669.0" y="551.0" width="3.0" height="5.0" fill="#10f010"/><rect x="665.5" y="558.5" width="6.1" height="11.1" fill="none" stroke="#10f010" stroke-width="0.9"/><rect x="671.0" y="560.0" width="4.0" height="15.0" fill="#10f010"/><rect x="666.5" y="567.5" width="5.1" height="9.1" fill="none" stroke="#10f010" stroke-width="0.9"/><rect x="668.0" y="576.0" width="7.0" height="3.0" fill="#10f010"/><rect x="672.0" y="577.0" width="3.0" height="4.0" fill="#10f010"/><rect x="653.9" y="641.3" width="8.0" height="2.4" fill="#10f010"/><rect x="651.4" y="641.7" width="10.1" height="1.6" fill="none" stroke="#10f010" stroke-width="0.9"/><rect x="645.2" y="641.2" width="2.4" height="2.5" fill="#10f010"/><rect x="645.2" y="644.2" width="2.4" height="2.5" fill="#10f010"/><rect x="645.2" y="647.2" width="2.4" height="2.5" fill="#10f010"/><rect x="645.2" y="650.2" width="2.4" height="2.5" fill="#10f010"/><rect x="645.2" y="653.2" width="2.4" height="2.5" fill="#10f010"/><rect x="645.2" y="656.2" width="2.4" height="2.5" fill="#10f010"/><rect x="645.2" y="659.2" width="2.4" height="2.5" fill="#10f010"/><rect x="645.0" y="662.5" width="2.9" height="2.0" fill="#10f010" opacity="0.7"/><rect x="648.1" y="641.2" width="2.4" height="2.5" fill="#10f010"/><rect x="648.1" y="644.2" width="2.4" height="2.5" fill="#10f010"/><rect x="648.1" y="647.2" width="2.4" height="2.5" fill="#10f010"/><rect x="648.1" y="650.2" width="2.4" height="2.5" fill="#10f010"/><rect x="648.1" y="653.2" width="2.4" height="2.5" fill="#10f010"/><rect x="648.1" y="656.2" width="2.4" height="2.5" fill="#10f010"/><rect x="648.1" y="659.2" width="2.4" height="2.5" fill="#10f010"/><rect x="648.1" y="662.2" width="2.4" height="2.5" fill="#10f010"/><rect x="651.0" y="644.2" width="2.4" height="2.5" fill="#10f010"/><rect x="651.0" y="647.2" width="2.4" height="2.5" fill="#10f010"/><rect x="651.0" y="650.2" width="2.4" height="2.5" fill="#10f010"/><rect x="651.0" y="653.2" width="2.4" height="2.5" fill="#10f010"/><rect x="651.0" y="656.2" width="2.4" height="2.5" fill="#10f010"/><rect x="651.0" y="659.2" width="2.4" height="2.5" fill="#10f010"/><rect x="651.0" y="662.2" width="2.4" height="2.5" fill="#10f010"/><rect x="653.9" y="644.2" width="2.4" height="2.5" fill="#10f010"/><rect x="653.9" y="647.2" width="2.4" height="2.5" fill="#10f010"/><rect x="653.9" y="650.2" width="2.4" height="2.5" fill="#10f010"/><rect x="653.9" y="653.2" width="2.4" height="2.5" fill="#10f010"/><rect x="653.9" y="656.2" width="2.4" height="2.5" fill="#10f010"/><rect x="653.9" y="659.2" width="2.4" height="2.5" fill="#10f010"/><rect x="653.9" y="662.2" width="2.4" height="2.5" fill="#10f010"/><rect x="657.1" y="644.6" width="1.7" height="1.8" fill="none" stroke="#10f010" stroke-width="0.8"/><rect x="656.8" y="647.2" width="2.4" height="2.5" fill="#10f010"/><rect x="656.5" y="650.5" width="2.9" height="2.0" fill="#10f010" opacity="0.7"/><rect x="656.8" y="653.2" width="2.4" height="2.5" fill="#10f010"/><rect x="656.8" y="656.2" width="2.4" height="2.5" fill="#10f010"/><rect x="656.8" y="659.2" width="2.4" height="2.5" fill="#10f010"/><rect x="657.1" y="662.6" width="1.7" height="1.8" fill="none" stroke="#10f010" stroke-width="0.8"/><rect x="659.6" y="644.2" width="2.4" height="2.5" fill="#10f010"/><rect x="659.6" y="647.2" width="2.4" height="2.5" fill="#10f010"/><rect x="659.6" y="650.2" width="2.4" height="2.5" fill="#10f010"/><rect x="659.6" y="653.2" width="2.4" height="2.5" fill="#10f010"/><rect x="659.6" y="656.2" width="2.4" height="2.5" fill="#10f010"/><rect x="659.6" y="659.2" width="2.4" height="2.5" fill="#10f010"/><rect x="659.6" y="662.2" width="2.4" height="2.5" fill="#10f010"/><rect x="662.5" y="641.2" width="2.4" height="2.5" fill="#10f010"/><rect x="662.5" y="644.2" width="2.4" height="2.5" fill="#10f010"/><rect x="662.5" y="647.2" width="2.4" height="2.5" fill="#10f010"/><rect x="662.2" y="650.5" width="2.9" height="2.0" fill="#10f010" opacity="0.7"/><rect x="662.5" y="653.2" width="2.4" height="2.5" fill="#10f010"/><rect x="662.5" y="659.2" width="2.4" height="2.5" fill="#10f010"/><rect x="662.5" y="662.2" width="2.4" height="2.5" fill="#10f010"/><rect x="665.7" y="641.6" width="1.7" height="1.8" fill="none" stroke="#10f010" stroke-width="0.8"/><rect x="665.7" y="644.6" width="1.7" height="1.8" fill="none" stroke="#10f010" stroke-width="0.8"/><rect x="665.4" y="647.2" width="2.4" height="2.5" fill="#10f010"/><rect x="665.4" y="650.2" width="2.4" height="2.5" fill="#10f010"/><rect x="665.4" y="653.2" width="2.4" height="2.5" fill="#10f010"/><rect x="665.7" y="656.6" width="1.7" height="1.8" fill="none" stroke="#10f010" stroke-width="0.8"/><rect x="665.4" y="659.2" width="2.4" height="2.5" fill="#10f010"/><rect x="665.4" y="662.2" width="2.4" height="2.5" fill="#10f010"/><rect x="633.0" y="659.0" width="12.0" height="6.0" fill="#10f010"/><rect x="631.5" y="628.5" width="5.1" height="2.1" fill="none" stroke="#10f010" stroke-width="0.9"/><rect x="638.0" y="629.0" width="4.0" height="4.0" fill="#10f010"/><rect x="646.0" y="628.0" width="3.0" height="6.0" fill="#10f010"/><rect x="653.0" y="629.0" width="2.0" height="5.0" fill="#10f010"/><rect x="670.3" y="632.3" width="8.4" height="7.4" fill="#10f010"/><rect x="679.2" y="632.2" width="2.5" height="3.5" fill="#10f010"/><rect x="679.2" y="636.2" width="2.5" height="3.5" fill="#10f010"/><rect x="682.2" y="632.2" width="2.5" height="3.5" fill="#10f010"/><rect x="682.2" y="636.2" width="2.5" height="3.5" fill="#10f010"/><rect x="685.2" y="632.2" width="2.5" height="3.5" fill="#10f010"/><rect x="685.0" y="636.5" width="3.0" height="3.0" fill="#10f010" opacity="0.7"/><rect x="673.5" y="643.8" width="9.0" height="2.9" fill="#10f010"/><rect x="670.2" y="640.2" width="2.7" height="3.0" fill="#10f010"/><rect x="670.2" y="643.8" width="2.7" height="3.0" fill="#10f010"/><rect x="673.8" y="640.6" width="2.0" height="2.3" fill="none" stroke="#10f010" stroke-width="0.8"/><rect x="676.6" y="640.2" width="2.7" height="3.0" fill="#10f010"/><rect x="679.9" y="640.2" width="2.7" height="3.0" fill="#10f010"/><rect x="683.0" y="640.2" width="2.7" height="3.0" fill="#10f010"/><rect x="683.4" y="644.1" width="2.0" height="2.3" fill="none" stroke="#10f010" stroke-width="0.8"/><rect x="673.6" y="650.3" width="6.1" height="2.4" fill="#10f010"/><rect x="670.0" y="647.5" width="3.3" height="2.0" fill="#10f010" opacity="0.7"/><rect x="670.6" y="650.6" width="2.1" height="1.8" fill="none" stroke="#10f010" stroke-width="0.8"/><rect x="673.9" y="647.6" width="2.1" height="1.8" fill="none" stroke="#10f010" stroke-width="0.8"/><rect x="676.9" y="647.2" width="2.8" height="2.5" fill="#10f010"/><rect x="672.0" y="638.0" width="9.0" height="8.0" fill="#10f010"/><rect x="648" y="667.0" width="4" height="1.6" fill="#10f010"/><rect x="648" y="669.6" width="4" height="1.6" fill="#10f010"/><rect x="648" y="672.2" width="4" height="1.6" fill="#10f010"/><rect x="648" y="674.8" width="4" height="1.6" fill="#10f010"/><rect x="648" y="677.4" width="4" height="1.6" fill="#10f010"/><rect x="648" y="680.0" width="4" height="1.6" fill="#10f010"/><rect x="648" y="682.6" width="4" height="1.6" fill="#10f010"/><rect x="648" y="685.2" width="4" height="1.6" fill="#10f010"/><rect x="648" y="687.8" width="4" height="1.6" fill="#10f010"/><rect x="648" y="690.4" width="4" height="1.6" fill="#10f010"/><rect x="656" y="667.0" width="5" height="1.6" fill="#10f010"/><rect x="656" y="669.6" width="5" height="1.6" fill="#10f010"/><rect x="656" y="672.2" width="5" height="1.6" fill="#10f010"/><rect x="656" y="674.8" width="5" height="1.6" fill="#10f010"/><rect x="656" y="677.4" width="5" height="1.6" fill="#10f010"/><rect x="656" y="680.0" width="5" height="1.6" fill="#10f010"/><rect x="656" y="682.6" width="5" height="1.6" fill="#10f010"/><rect x="656" y="685.2" width="5" height="1.6" fill="#10f010"/><rect x="656" y="687.8" width="5" height="1.6" fill="#10f010"/><rect x="656" y="690.4" width="5" height="1.6" fill="#10f010"/><rect x="636.5" y="668.5" width="5.1" height="31.1" fill="none" stroke="#10f010" stroke-width="0.9"/><rect x="638.0" y="670.5" width="2.1" height="27.1" fill="none" stroke="#10f010" stroke-width="0.9"/><rect x="662" y="670.0" width="3" height="1.6" fill="#10f010"/><rect x="662" y="672.6" width="3" height="1.6" fill="#10f010"/><rect x="662" y="675.2" width="3" height="1.6" fill="#10f010"/><rect x="662" y="677.8" width="3" height="1.6" fill="#10f010"/><rect x="662" y="680.4" width="3" height="1.6" fill="#10f010"/><rect x="662" y="683.0" width="3" height="1.6" fill="#10f010"/><rect x="662" y="685.6" width="3" height="1.6" fill="#10f010"/><rect x="662" y="688.2" width="3" height="1.6" fill="#10f010"/><rect x="670.5" y="661.7" width="16.3" height="2.8" fill="#10f010"/><rect x="668.0" y="666.0" width="12.0" height="2.0" fill="#10f010"/><rect x="675.8" y="673.2" width="7.9" height="5.1" fill="#10f010"/><rect x="667.2" y="670.2" width="2.3" height="2.4" fill="#10f010"/><rect x="667.2" y="673.1" width="2.3" height="2.4" fill="#10f010"/><rect x="667.2" y="676.0" width="2.3" height="2.4" fill="#10f010"/><rect x="667.2" y="678.8" width="2.3" height="2.4" fill="#10f010"/><rect x="667.2" y="681.7" width="2.3" height="2.4" fill="#10f010"/><rect x="667.2" y="684.5" width="2.3" height="2.4" fill="#10f010"/><rect x="667.2" y="687.4" width="2.3" height="2.4" fill="#10f010"/><rect x="670.1" y="670.2" width="2.3" height="2.4" fill="#10f010"/><rect x="670.1" y="673.1" width="2.3" height="2.4" fill="#10f010"/><rect x="670.1" y="676.0" width="2.3" height="2.4" fill="#10f010"/><rect x="670.1" y="681.7" width="2.3" height="2.4" fill="#10f010"/><rect x="670.1" y="684.5" width="2.3" height="2.4" fill="#10f010"/><rect x="670.1" y="687.4" width="2.3" height="2.4" fill="#10f010"/><rect x="672.9" y="670.2" width="2.3" height="2.4" fill="#10f010"/><rect x="672.9" y="673.1" width="2.3" height="2.4" fill="#10f010"/><rect x="672.7" y="676.2" width="2.8" height="1.9" fill="#10f010" opacity="0.7"/><rect x="673.3" y="679.2" width="1.6" height="1.7" fill="none" stroke="#10f010" stroke-width="0.8"/><rect x="673.3" y="682.0" width="1.6" height="1.7" fill="none" stroke="#10f010" stroke-width="0.8"/><rect x="673.3" y="684.9" width="1.6" height="1.7" fill="none" stroke="#10f010" stroke-width="0.8"/><rect x="672.9" y="687.4" width="2.3" height="2.4" fill="#10f010"/><rect x="675.8" y="670.2" width="2.3" height="2.4" fill="#10f010"/><rect x="675.8" y="678.8" width="2.3" height="2.4" fill="#10f010"/><rect x="675.8" y="681.7" width="2.3" height="2.4" fill="#10f010"/><rect x="675.8" y="684.5" width="2.3" height="2.4" fill="#10f010"/><rect x="675.8" y="687.4" width="2.3" height="2.4" fill="#10f010"/><rect x="678.6" y="670.2" width="2.3" height="2.4" fill="#10f010"/><rect x="678.6" y="678.8" width="2.3" height="2.4" fill="#10f010"/><rect x="678.6" y="681.7" width="2.3" height="2.4" fill="#10f010"/><rect x="678.6" y="684.5" width="2.3" height="2.4" fill="#10f010"/><rect x="678.6" y="687.4" width="2.3" height="2.4" fill="#10f010"/><rect x="681.4" y="670.2" width="2.3" height="2.4" fill="#10f010"/><rect x="681.4" y="678.8" width="2.3" height="2.4" fill="#10f010"/><rect x="681.4" y="681.7" width="2.3" height="2.4" fill="#10f010"/><rect x="681.4" y="684.5" width="2.3" height="2.4" fill="#10f010"/><rect x="681.8" y="687.7" width="1.6" height="1.7" fill="none" stroke="#10f010" stroke-width="0.8"/><rect x="672.0" y="692.0" width="4.0" height="4.0" fill="#10f010"/><rect x="679.5" y="692.5" width="4.1" height="2.1" fill="none" stroke="#10f010" stroke-width="0.9"/><rect x="620.5" y="694.5" width="7.1" height="5.1" fill="none" stroke="#10f010" stroke-width="0.9"/><rect x="621.0" y="700.0" width="6.0" height="4.0" fill="#10f010"/><rect x="632.2" y="710.6" width="11.0" height="5.1" fill="#10f010"/><rect x="635.1" y="704.9" width="8.1" height="8.0" fill="#10f010"/><rect x="629.6" y="696.6" width="1.7" height="1.7" fill="none" stroke="#10f010" stroke-width="0.8"/><rect x="629.2" y="702.0" width="2.4" height="2.4" fill="#10f010"/><rect x="629.2" y="704.8" width="2.4" height="2.4" fill="#10f010"/><rect x="629.2" y="707.7" width="2.4" height="2.4" fill="#10f010"/><rect x="629.2" y="710.5" width="2.4" height="2.4" fill="#10f010"/><rect x="629.2" y="713.4" width="2.4" height="2.4" fill="#10f010"/><rect x="632.1" y="696.2" width="2.4" height="2.4" fill="#10f010"/><rect x="632.5" y="699.5" width="1.7" height="1.7" fill="none" stroke="#10f010" stroke-width="0.8"/><rect x="632.1" y="702.0" width="2.4" height="2.4" fill="#10f010"/><rect x="632.1" y="704.8" width="2.4" height="2.4" fill="#10f010"/><rect x="635.0" y="696.2" width="2.4" height="2.4" fill="#10f010"/><rect x="635.0" y="699.1" width="2.4" height="2.4" fill="#10f010"/><rect x="635.0" y="702.0" width="2.4" height="2.4" fill="#10f010"/><rect x="637.9" y="696.2" width="2.4" height="2.4" fill="#10f010"/><rect x="637.9" y="699.1" width="2.4" height="2.4" fill="#10f010"/><rect x="641.2" y="696.6" width="1.7" height="1.7" fill="none" stroke="#10f010" stroke-width="0.8"/><rect x="640.8" y="699.1" width="2.4" height="2.4" fill="#10f010"/><rect x="640.8" y="702.0" width="2.4" height="2.4" fill="#10f010"/><rect x="643.7" y="696.2" width="2.4" height="2.4" fill="#10f010"/><rect x="643.7" y="699.1" width="2.4" height="2.4" fill="#10f010"/><rect x="644.0" y="702.3" width="1.7" height="1.7" fill="none" stroke="#10f010" stroke-width="0.8"/><rect x="643.7" y="704.8" width="2.4" height="2.4" fill="#10f010"/><rect x="644.0" y="708.0" width="1.7" height="1.7" fill="none" stroke="#10f010" stroke-width="0.8"/><rect x="643.7" y="710.5" width="2.4" height="2.4" fill="#10f010"/><rect x="643.7" y="713.4" width="2.4" height="2.4" fill="#10f010"/><rect x="646.9" y="696.6" width="1.7" height="1.7" fill="none" stroke="#10f010" stroke-width="0.8"/><rect x="646.9" y="702.3" width="1.7" height="1.7" fill="none" stroke="#10f010" stroke-width="0.8"/><rect x="646.9" y="705.2" width="1.7" height="1.7" fill="none" stroke="#10f010" stroke-width="0.8"/><rect x="646.9" y="708.0" width="1.7" height="1.7" fill="none" stroke="#10f010" stroke-width="0.8"/><rect x="646.9" y="710.9" width="1.7" height="1.7" fill="none" stroke="#10f010" stroke-width="0.8"/><rect x="646.6" y="713.4" width="2.4" height="2.4" fill="#10f010"/><rect x="649.5" y="696.2" width="2.4" height="2.4" fill="#10f010"/><rect x="649.5" y="699.1" width="2.4" height="2.4" fill="#10f010"/><rect x="649.5" y="702.0" width="2.4" height="2.4" fill="#10f010"/><rect x="649.5" y="704.8" width="2.4" height="2.4" fill="#10f010"/><rect x="649.5" y="707.7" width="2.4" height="2.4" fill="#10f010"/><rect x="649.5" y="710.5" width="2.4" height="2.4" fill="#10f010"/><rect x="649.5" y="713.4" width="2.4" height="2.4" fill="#10f010"/><rect x="652.4" y="699.1" width="2.4" height="2.4" fill="#10f010"/><rect x="652.1" y="702.2" width="2.9" height="1.9" fill="#10f010" opacity="0.7"/><rect x="652.4" y="710.5" width="2.4" height="2.4" fill="#10f010"/><rect x="652.4" y="713.4" width="2.4" height="2.4" fill="#10f010"/><rect x="708.0" y="671.5" width="18.0" height="3.5" fill="#10f010"/><rect x="718.0" y="674.0" width="5.4" height="4.0" fill="#10f010"/><rect x="727.0" y="674.0" width="4.0" height="1.6" fill="#10f010"/><rect x="725.0" y="681.6" width="6.0" height="3.4" fill="#10f010"/><rect x="730.0" y="667.4" width="3.0" height="2.1" fill="#10f010"/><rect x="712.5" y="679.5" width="3.1" height="2.1" fill="none" stroke="#10f010" stroke-width="0.9"/><rect x="705.0" y="689.0" width="4.0" height="4.0" fill="#10f010"/><rect x="703.6" y="694.5" width="6.9" height="3.5" fill="#10f010"/><rect x="714.0" y="693.0" width="13.0" height="3.0" fill="#10f010"/><rect x="724.0" y="697.0" width="3.7" height="3.5" fill="#10f010"/><rect x="711.4" y="702.0" width="12.0" height="6.0" fill="#10f010"/><rect x="720.0" y="706.6" width="5.0" height="2.4" fill="#10f010"/><rect x="706.5" y="703.5" width="2.1" height="3.1" fill="none" stroke="#10f010" stroke-width="0.9"/><rect x="729.5" y="689.5" width="2.1" height="2.1" fill="none" stroke="#10f010" stroke-width="0.9"/><rect x="755.0" y="661.0" width="18.4" height="3.0" fill="#10f010"/><rect x="741.0" y="667.0" width="7.0" height="3.0" fill="#10f010"/><rect x="765.0" y="667.0" width="7.0" height="3.0" fill="#10f010"/><rect x="740.0" y="671.0" width="32.0" height="2.5" fill="#10f010"/><rect x="737.0" y="677.0" width="36.0" height="9.0" fill="#10f010"/><rect x="737.0" y="675.0" width="3.0" height="15.0" fill="#10f010"/><rect x="695.0" y="668.0" width="4.0" height="12.0" fill="#10f010"/><rect x="733.0" y="668.0" width="3.0" height="8.0" fill="#10f010"/><rect x="743.2" y="698.7" width="5.1" height="4.8" fill="#10f010"/><rect x="740.2" y="693.2" width="2.4" height="2.2" fill="#10f010"/><rect x="740.0" y="696.2" width="2.9" height="1.7" fill="#10f010" opacity="0.7"/><rect x="740.6" y="699.0" width="1.7" height="1.5" fill="none" stroke="#10f010" stroke-width="0.8"/><rect x="740.2" y="701.4" width="2.4" height="2.2" fill="#10f010"/><rect x="740.2" y="704.1" width="2.4" height="2.2" fill="#10f010"/><rect x="740.6" y="707.2" width="1.7" height="1.5" fill="none" stroke="#10f010" stroke-width="0.8"/><rect x="740.2" y="709.5" width="2.4" height="2.2" fill="#10f010"/><rect x="743.1" y="693.2" width="2.4" height="2.2" fill="#10f010"/><rect x="742.9" y="696.2" width="2.9" height="1.7" fill="#10f010" opacity="0.7"/><rect x="743.5" y="704.5" width="1.7" height="1.5" fill="none" stroke="#10f010" stroke-width="0.8"/><rect x="743.5" y="707.2" width="1.7" height="1.5" fill="none" stroke="#10f010" stroke-width="0.8"/><rect x="743.1" y="709.5" width="2.4" height="2.2" fill="#10f010"/><rect x="746.0" y="693.2" width="2.4" height="2.2" fill="#10f010"/><rect x="746.3" y="696.3" width="1.7" height="1.5" fill="none" stroke="#10f010" stroke-width="0.8"/><rect x="746.0" y="704.1" width="2.4" height="2.2" fill="#10f010"/><rect x="746.3" y="707.2" width="1.7" height="1.5" fill="none" stroke="#10f010" stroke-width="0.8"/><rect x="748.8" y="693.2" width="2.4" height="2.2" fill="#10f010"/><rect x="748.8" y="696.0" width="2.4" height="2.2" fill="#10f010"/><rect x="748.6" y="698.9" width="2.9" height="1.7" fill="#10f010" opacity="0.7"/><rect x="749.2" y="701.7" width="1.7" height="1.5" fill="none" stroke="#10f010" stroke-width="0.8"/><rect x="748.8" y="704.1" width="2.4" height="2.2" fill="#10f010"/><rect x="748.8" y="706.8" width="2.4" height="2.2" fill="#10f010"/><rect x="748.8" y="709.5" width="2.4" height="2.2" fill="#10f010"/><rect x="751.4" y="693.5" width="2.9" height="1.7" fill="#10f010" opacity="0.7"/><rect x="752.0" y="696.3" width="1.7" height="1.5" fill="none" stroke="#10f010" stroke-width="0.8"/><rect x="751.7" y="698.7" width="2.4" height="2.2" fill="#10f010"/><rect x="752.0" y="701.7" width="1.7" height="1.5" fill="none" stroke="#10f010" stroke-width="0.8"/><rect x="751.7" y="706.8" width="2.4" height="2.2" fill="#10f010"/><rect x="751.7" y="709.5" width="2.4" height="2.2" fill="#10f010"/><rect x="754.5" y="693.2" width="2.4" height="2.2" fill="#10f010"/><rect x="754.5" y="696.0" width="2.4" height="2.2" fill="#10f010"/><rect x="754.5" y="698.7" width="2.4" height="2.2" fill="#10f010"/><rect x="754.5" y="704.1" width="2.4" height="2.2" fill="#10f010"/><rect x="754.5" y="706.8" width="2.4" height="2.2" fill="#10f010"/><rect x="754.3" y="709.8" width="2.9" height="1.7" fill="#10f010" opacity="0.7"/><rect x="757.4" y="693.2" width="2.4" height="2.2" fill="#10f010"/><rect x="757.7" y="696.3" width="1.7" height="1.5" fill="none" stroke="#10f010" stroke-width="0.8"/><rect x="757.7" y="699.0" width="1.7" height="1.5" fill="none" stroke="#10f010" stroke-width="0.8"/><rect x="757.4" y="701.4" width="2.4" height="2.2" fill="#10f010"/><rect x="757.4" y="704.1" width="2.4" height="2.2" fill="#10f010"/><rect x="757.4" y="706.8" width="2.4" height="2.2" fill="#10f010"/><rect x="757.4" y="709.5" width="2.4" height="2.2" fill="#10f010"/><rect x="766.0" y="706.7" width="10.8" height="5.1" fill="#10f010"/><rect x="760.2" y="695.2" width="2.4" height="2.4" fill="#10f010"/><rect x="760.0" y="698.4" width="2.9" height="1.9" fill="#10f010" opacity="0.7"/><rect x="760.2" y="701.0" width="2.4" height="2.4" fill="#10f010"/><rect x="760.2" y="703.8" width="2.4" height="2.4" fill="#10f010"/><rect x="760.2" y="706.7" width="2.4" height="2.4" fill="#10f010"/><rect x="760.0" y="709.8" width="2.9" height="1.9" fill="#10f010" opacity="0.7"/><rect x="760.2" y="712.4" width="2.4" height="2.4" fill="#10f010"/><rect x="762.9" y="695.5" width="2.9" height="1.9" fill="#10f010" opacity="0.7"/><rect x="763.1" y="698.1" width="2.4" height="2.4" fill="#10f010"/><rect x="763.1" y="701.0" width="2.4" height="2.4" fill="#10f010"/><rect x="763.1" y="703.8" width="2.4" height="2.4" fill="#10f010"/><rect x="763.1" y="706.7" width="2.4" height="2.4" fill="#10f010"/><rect x="763.1" y="709.5" width="2.4" height="2.4" fill="#10f010"/><rect x="763.1" y="712.4" width="2.4" height="2.4" fill="#10f010"/><rect x="766.0" y="695.2" width="2.4" height="2.4" fill="#10f010"/><rect x="766.3" y="698.5" width="1.7" height="1.7" fill="none" stroke="#10f010" stroke-width="0.8"/><rect x="766.0" y="701.0" width="2.4" height="2.4" fill="#10f010"/><rect x="766.0" y="703.8" width="2.4" height="2.4" fill="#10f010"/><rect x="766.3" y="712.7" width="1.7" height="1.7" fill="none" stroke="#10f010" stroke-width="0.8"/><rect x="768.8" y="695.2" width="2.4" height="2.4" fill="#10f010"/><rect x="768.8" y="698.1" width="2.4" height="2.4" fill="#10f010"/><rect x="768.8" y="701.0" width="2.4" height="2.4" fill="#10f010"/><rect x="768.8" y="703.8" width="2.4" height="2.4" fill="#10f010"/><rect x="769.2" y="712.7" width="1.7" height="1.7" fill="none" stroke="#10f010" stroke-width="0.8"/><rect x="771.7" y="695.2" width="2.4" height="2.4" fill="#10f010"/><rect x="771.7" y="698.1" width="2.4" height="2.4" fill="#10f010"/><rect x="771.7" y="701.0" width="2.4" height="2.4" fill="#10f010"/><rect x="771.7" y="703.8" width="2.4" height="2.4" fill="#10f010"/><rect x="772.0" y="712.7" width="1.7" height="1.7" fill="none" stroke="#10f010" stroke-width="0.8"/><rect x="774.5" y="695.2" width="2.4" height="2.4" fill="#10f010"/><rect x="774.5" y="698.1" width="2.4" height="2.4" fill="#10f010"/><rect x="774.9" y="701.3" width="1.7" height="1.7" fill="none" stroke="#10f010" stroke-width="0.8"/><rect x="774.3" y="704.1" width="2.9" height="1.9" fill="#10f010" opacity="0.7"/><rect x="774.5" y="712.4" width="2.4" height="2.4" fill="#10f010"/><rect x="777.4" y="695.2" width="2.4" height="2.4" fill="#10f010"/><rect x="777.4" y="698.1" width="2.4" height="2.4" fill="#10f010"/><rect x="777.4" y="701.0" width="2.4" height="2.4" fill="#10f010"/><rect x="777.4" y="703.8" width="2.4" height="2.4" fill="#10f010"/><rect x="777.4" y="706.7" width="2.4" height="2.4" fill="#10f010"/><rect x="777.4" y="709.5" width="2.4" height="2.4" fill="#10f010"/><rect x="777.4" y="712.4" width="2.4" height="2.4" fill="#10f010"/><rect x="784.0" y="706.7" width="5.3" height="10.6" fill="none" stroke="#10f010" stroke-width="0.9"/><rect x="780.2" y="706.2" width="2.8" height="3.5" fill="#10f010"/><rect x="780.2" y="710.2" width="2.8" height="3.5" fill="#10f010"/><rect x="789.0" y="689.4" width="7.6" height="4.8" fill="#10f010"/><rect x="797.2" y="694.9" width="4.9" height="2.1" fill="#10f010"/><rect x="799.9" y="667.7" width="4.9" height="7.5" fill="#10f010"/><rect x="794.9" y="692.6" width="4.1" height="4.0" fill="none" stroke="#10f010" stroke-width="0.9"/><rect x="792.2" y="689.8" width="6.8" height="4.0" fill="none" stroke="#10f010" stroke-width="0.9"/><rect x="802.7" y="684.0" width="4.9" height="7.5" fill="#10f010"/><rect x="786.2" y="662.2" width="2.2" height="2.2" fill="#10f010"/><rect x="786.2" y="665.0" width="2.2" height="2.2" fill="#10f010"/><rect x="786.2" y="667.7" width="2.2" height="2.2" fill="#10f010"/><rect x="786.2" y="670.4" width="2.2" height="2.2" fill="#10f010"/><rect x="786.2" y="673.1" width="2.2" height="2.2" fill="#10f010"/><rect x="786.2" y="675.8" width="2.2" height="2.2" fill="#10f010"/><rect x="786.2" y="678.5" width="2.2" height="2.2" fill="#10f010"/><rect x="786.2" y="681.2" width="2.2" height="2.2" fill="#10f010"/><rect x="786.2" y="684.0" width="2.2" height="2.2" fill="#10f010"/><rect x="786.2" y="686.7" width="2.2" height="2.2" fill="#10f010"/><rect x="786.2" y="692.1" width="2.2" height="2.2" fill="#10f010"/><rect x="786.0" y="695.1" width="2.7" height="1.7" fill="#10f010" opacity="0.7"/><rect x="786.2" y="697.5" width="2.2" height="2.2" fill="#10f010"/><rect x="789.3" y="662.6" width="1.5" height="1.5" fill="none" stroke="#10f010" stroke-width="0.8"/><rect x="789.0" y="665.0" width="2.2" height="2.2" fill="#10f010"/><rect x="789.0" y="667.7" width="2.2" height="2.2" fill="#10f010"/><rect x="788.7" y="670.6" width="2.7" height="1.7" fill="#10f010" opacity="0.7"/><rect x="789.0" y="673.1" width="2.2" height="2.2" fill="#10f010"/><rect x="789.3" y="676.2" width="1.5" height="1.5" fill="none" stroke="#10f010" stroke-width="0.8"/><rect x="789.3" y="678.9" width="1.5" height="1.5" fill="none" stroke="#10f010" stroke-width="0.8"/><rect x="789.3" y="681.6" width="1.5" height="1.5" fill="none" stroke="#10f010" stroke-width="0.8"/><rect x="789.0" y="684.0" width="2.2" height="2.2" fill="#10f010"/><rect x="788.7" y="686.9" width="2.7" height="1.7" fill="#10f010" opacity="0.7"/><rect x="789.0" y="694.8" width="2.2" height="2.2" fill="#10f010"/><rect x="789.0" y="697.5" width="2.2" height="2.2" fill="#10f010"/><rect x="791.7" y="662.2" width="2.2" height="2.2" fill="#10f010"/><rect x="791.7" y="665.0" width="2.2" height="2.2" fill="#10f010"/><rect x="791.7" y="667.7" width="2.2" height="2.2" fill="#10f010"/><rect x="791.7" y="670.4" width="2.2" height="2.2" fill="#10f010"/><rect x="792.1" y="673.5" width="1.5" height="1.5" fill="none" stroke="#10f010" stroke-width="0.8"/><rect x="791.7" y="675.8" width="2.2" height="2.2" fill="#10f010"/><rect x="791.5" y="678.8" width="2.7" height="1.7" fill="#10f010" opacity="0.7"/><rect x="791.7" y="681.2" width="2.2" height="2.2" fill="#10f010"/><rect x="791.7" y="684.0" width="2.2" height="2.2" fill="#10f010"/><rect x="791.7" y="686.7" width="2.2" height="2.2" fill="#10f010"/><rect x="791.7" y="694.8" width="2.2" height="2.2" fill="#10f010"/><rect x="791.7" y="697.5" width="2.2" height="2.2" fill="#10f010"/><rect x="794.4" y="662.2" width="2.2" height="2.2" fill="#10f010"/><rect x="794.4" y="665.0" width="2.2" height="2.2" fill="#10f010"/><rect x="794.4" y="667.7" width="2.2" height="2.2" fill="#10f010"/><rect x="794.4" y="670.4" width="2.2" height="2.2" fill="#10f010"/><rect x="794.4" y="675.8" width="2.2" height="2.2" fill="#10f010"/><rect x="794.2" y="678.8" width="2.7" height="1.7" fill="#10f010" opacity="0.7"/><rect x="794.4" y="681.2" width="2.2" height="2.2" fill="#10f010"/><rect x="794.4" y="684.0" width="2.2" height="2.2" fill="#10f010"/><rect x="794.4" y="686.7" width="2.2" height="2.2" fill="#10f010"/><rect x="794.2" y="697.8" width="2.7" height="1.7" fill="#10f010" opacity="0.7"/><rect x="797.2" y="665.0" width="2.2" height="2.2" fill="#10f010"/><rect x="797.2" y="667.7" width="2.2" height="2.2" fill="#10f010"/><rect x="796.9" y="670.6" width="2.7" height="1.7" fill="#10f010" opacity="0.7"/><rect x="797.2" y="673.1" width="2.2" height="2.2" fill="#10f010"/><rect x="797.2" y="675.8" width="2.2" height="2.2" fill="#10f010"/><rect x="797.2" y="678.5" width="2.2" height="2.2" fill="#10f010"/><rect x="797.2" y="681.2" width="2.2" height="2.2" fill="#10f010"/><rect x="797.2" y="684.0" width="2.2" height="2.2" fill="#10f010"/><rect x="797.2" y="686.7" width="2.2" height="2.2" fill="#10f010"/><rect x="797.5" y="697.9" width="1.5" height="1.5" fill="none" stroke="#10f010" stroke-width="0.8"/><rect x="799.9" y="665.0" width="2.2" height="2.2" fill="#10f010"/><rect x="799.9" y="675.8" width="2.2" height="2.2" fill="#10f010"/><rect x="799.9" y="678.5" width="2.2" height="2.2" fill="#10f010"/><rect x="799.9" y="684.0" width="2.2" height="2.2" fill="#10f010"/><rect x="799.9" y="686.7" width="2.2" height="2.2" fill="#10f010"/><rect x="799.9" y="689.4" width="2.2" height="2.2" fill="#10f010"/><rect x="799.9" y="692.1" width="2.2" height="2.2" fill="#10f010"/><rect x="799.9" y="697.5" width="2.2" height="2.2" fill="#10f010"/><rect x="802.6" y="662.2" width="2.2" height="2.2" fill="#10f010"/><rect x="802.6" y="665.0" width="2.2" height="2.2" fill="#10f010"/><rect x="802.4" y="676.1" width="2.7" height="1.7" fill="#10f010" opacity="0.7"/><rect x="802.6" y="681.2" width="2.2" height="2.2" fill="#10f010"/><rect x="802.6" y="692.1" width="2.2" height="2.2" fill="#10f010"/><rect x="802.6" y="694.8" width="2.2" height="2.2" fill="#10f010"/><rect x="802.6" y="697.5" width="2.2" height="2.2" fill="#10f010"/><rect x="805.1" y="662.5" width="2.7" height="1.7" fill="#10f010" opacity="0.7"/><rect x="805.7" y="665.3" width="1.5" height="1.5" fill="none" stroke="#10f010" stroke-width="0.8"/><rect x="805.3" y="667.7" width="2.2" height="2.2" fill="#10f010"/><rect x="805.7" y="676.2" width="1.5" height="1.5" fill="none" stroke="#10f010" stroke-width="0.8"/><rect x="805.3" y="678.5" width="2.2" height="2.2" fill="#10f010"/><rect x="805.3" y="681.2" width="2.2" height="2.2" fill="#10f010"/><rect x="805.7" y="692.5" width="1.5" height="1.5" fill="none" stroke="#10f010" stroke-width="0.8"/><rect x="805.3" y="694.8" width="2.2" height="2.2" fill="#10f010"/><rect x="805.3" y="697.5" width="2.2" height="2.2" fill="#10f010"/><rect x="808.1" y="662.2" width="2.2" height="2.2" fill="#10f010"/><rect x="808.1" y="665.0" width="2.2" height="2.2" fill="#10f010"/><rect x="808.1" y="667.7" width="2.2" height="2.2" fill="#10f010"/><rect x="808.1" y="673.1" width="2.2" height="2.2" fill="#10f010"/><rect x="808.1" y="675.8" width="2.2" height="2.2" fill="#10f010"/><rect x="808.1" y="678.5" width="2.2" height="2.2" fill="#10f010"/><rect x="808.1" y="681.2" width="2.2" height="2.2" fill="#10f010"/><rect x="808.1" y="684.0" width="2.2" height="2.2" fill="#10f010"/><rect x="808.1" y="686.7" width="2.2" height="2.2" fill="#10f010"/><rect x="808.1" y="689.4" width="2.2" height="2.2" fill="#10f010"/><rect x="808.1" y="692.1" width="2.2" height="2.2" fill="#10f010"/><rect x="808.1" y="697.5" width="2.2" height="2.2" fill="#10f010"/><rect x="810.8" y="662.2" width="2.2" height="2.2" fill="#10f010"/><rect x="810.5" y="665.2" width="2.7" height="1.7" fill="#10f010" opacity="0.7"/><rect x="810.8" y="667.7" width="2.2" height="2.2" fill="#10f010"/><rect x="810.8" y="670.4" width="2.2" height="2.2" fill="#10f010"/><rect x="810.8" y="673.1" width="2.2" height="2.2" fill="#10f010"/><rect x="810.8" y="675.8" width="2.2" height="2.2" fill="#10f010"/><rect x="810.8" y="678.5" width="2.2" height="2.2" fill="#10f010"/><rect x="810.8" y="681.2" width="2.2" height="2.2" fill="#10f010"/><rect x="810.8" y="684.0" width="2.2" height="2.2" fill="#10f010"/><rect x="811.1" y="687.0" width="1.5" height="1.5" fill="none" stroke="#10f010" stroke-width="0.8"/><rect x="810.8" y="689.4" width="2.2" height="2.2" fill="#10f010"/><rect x="811.1" y="692.5" width="1.5" height="1.5" fill="none" stroke="#10f010" stroke-width="0.8"/><rect x="810.8" y="694.8" width="2.2" height="2.2" fill="#10f010"/><rect x="810.8" y="697.5" width="2.2" height="2.2" fill="#10f010"/><rect x="813.5" y="662.2" width="2.2" height="2.2" fill="#10f010"/><rect x="813.5" y="665.0" width="2.2" height="2.2" fill="#10f010"/><rect x="813.5" y="667.7" width="2.2" height="2.2" fill="#10f010"/><rect x="813.5" y="670.4" width="2.2" height="2.2" fill="#10f010"/><rect x="813.9" y="676.2" width="1.5" height="1.5" fill="none" stroke="#10f010" stroke-width="0.8"/><rect x="813.5" y="678.5" width="2.2" height="2.2" fill="#10f010"/><rect x="813.3" y="681.5" width="2.7" height="1.7" fill="#10f010" opacity="0.7"/><rect x="813.9" y="684.3" width="1.5" height="1.5" fill="none" stroke="#10f010" stroke-width="0.8"/><rect x="813.5" y="686.7" width="2.2" height="2.2" fill="#10f010"/><rect x="813.9" y="689.7" width="1.5" height="1.5" fill="none" stroke="#10f010" stroke-width="0.8"/><rect x="813.9" y="692.5" width="1.5" height="1.5" fill="none" stroke="#10f010" stroke-width="0.8"/><rect x="813.5" y="694.8" width="2.2" height="2.2" fill="#10f010"/><rect x="813.5" y="697.5" width="2.2" height="2.2" fill="#10f010"/><rect x="789.4" y="700.7" width="9.6" height="10.6" fill="none" stroke="#10f010" stroke-width="0.9"/><rect x="786.2" y="700.2" width="2.2" height="3.5" fill="#10f010"/><rect x="786.2" y="704.2" width="2.2" height="3.5" fill="#10f010"/><rect x="800.0" y="700.2" width="2.2" height="3.5" fill="#10f010"/><rect x="800.0" y="704.2" width="2.2" height="3.5" fill="#10f010"/><rect x="802.8" y="700.2" width="2.2" height="3.5" fill="#10f010"/><rect x="802.5" y="704.5" width="2.8" height="3.0" fill="#10f010" opacity="0.7"/><rect x="805.9" y="700.6" width="1.6" height="2.8" fill="none" stroke="#10f010" stroke-width="0.8"/><rect x="805.5" y="704.2" width="2.2" height="3.5" fill="#10f010"/><rect x="793.0" y="658.0" width="7.0" height="5.0" fill="#10f010"/><rect x="779.5" y="665.5" width="5.1" height="5.1" fill="none" stroke="#10f010" stroke-width="0.9"/><rect x="779.5" y="673.5" width="5.1" height="5.1" fill="none" stroke="#10f010" stroke-width="0.9"/><rect x="779.5" y="681.5" width="5.1" height="5.1" fill="none" stroke="#10f010" stroke-width="0.9"/><rect x="779.5" y="689.5" width="5.1" height="5.1" fill="none" stroke="#10f010" stroke-width="0.9"/><rect x="831.5" y="659.5" width="5.1" height="3.1" fill="none" stroke="#10f010" stroke-width="0.9"/><rect x="840.5" y="659.5" width="5.1" height="3.1" fill="none" stroke="#10f010" stroke-width="0.9"/><rect x="831.5" y="664.5" width="4.1" height="2.1" fill="none" stroke="#10f010" stroke-width="0.9"/><rect x="838.5" y="664.5" width="4.1" height="2.1" fill="none" stroke="#10f010" stroke-width="0.9"/><rect x="845.5" y="664.5" width="5.1" height="2.1" fill="none" stroke="#10f010" stroke-width="0.9"/><rect x="859.6" y="666.5" width="9.0" height="9.0" fill="#10f010"/><rect x="857.5" y="678.5" width="3.1" height="3.1" fill="none" stroke="#10f010" stroke-width="0.9"/><rect x="857.5" y="682.5" width="3.1" height="3.1" fill="none" stroke="#10f010" stroke-width="0.9"/><rect x="862.5" y="680.5" width="3.1" height="5.1" fill="none" stroke="#10f010" stroke-width="0.9"/><rect x="861.0" y="694.0" width="7.0" height="6.0" fill="#10f010"/><rect x="824.5" y="688.5" width="3.1" height="4.1" fill="none" stroke="#10f010" stroke-width="0.9"/><rect x="823.4" y="700.2" width="1.8" height="13.4" fill="none" stroke="#10f010" stroke-width="0.9"/><rect x="857.5" y="700.5" width="2.0" height="13.1" fill="none" stroke="#10f010" stroke-width="0.9"/><rect x="876.0" y="658.0" width="4.0" height="2.0" fill="#10f010"/><rect x="876.0" y="661.0" width="4.0" height="2.0" fill="#10f010"/><rect x="888.5" y="653.5" width="2.1" height="2.1" fill="none" stroke="#10f010" stroke-width="0.9"/><rect x="888.5" y="665.5" width="2.1" height="2.1" fill="none" stroke="#10f010" stroke-width="0.9"/><rect x="883.5" y="668.5" width="2.1" height="2.1" fill="none" stroke="#10f010" stroke-width="0.9"/><rect x="865.0" y="667.0" width="4.0" height="8.0" fill="#10f010"/><rect x="871.5" y="669.5" width="2.1" height="2.1" fill="none" stroke="#10f010" stroke-width="0.9"/><rect x="874.0" y="670.0" width="4.0" height="4.0" fill="#10f010"/><rect x="880.5" y="670.5" width="2.1" height="4.1" fill="none" stroke="#10f010" stroke-width="0.9"/><rect x="879.5" y="682.5" width="2.1" height="5.1" fill="none" stroke="#10f010" stroke-width="0.9"/><rect x="876.8" y="688.3" width="5.9" height="8.4" fill="#10f010"/><rect x="870.2" y="688.2" width="2.8" height="2.5" fill="#10f010"/><rect x="870.2" y="691.2" width="2.8" height="2.5" fill="#10f010"/><rect x="870.2" y="697.2" width="2.8" height="2.5" fill="#10f010"/><rect x="873.5" y="688.2" width="2.8" height="2.5" fill="#10f010"/><rect x="873.5" y="691.2" width="2.8" height="2.5" fill="#10f010"/><rect x="873.5" y="694.2" width="2.8" height="2.5" fill="#10f010"/><rect x="873.5" y="697.2" width="2.8" height="2.5" fill="#10f010"/><rect x="876.8" y="697.2" width="2.8" height="2.5" fill="#10f010"/><rect x="880.0" y="697.2" width="2.8" height="2.5" fill="#10f010"/><rect x="879.5" y="701.5" width="2.1" height="13.1" fill="none" stroke="#10f010" stroke-width="0.9"/><rect x="921.0" y="668.0" width="2.0" height="3.0" fill="#10f010"/><rect x="926.5" y="670.5" width="1.1" height="4.1" fill="none" stroke="#10f010" stroke-width="0.9"/><rect x="930.5" y="667.5" width="2.1" height="2.1" fill="none" stroke="#10f010" stroke-width="0.9"/><rect x="919.3" y="697.3" width="7.7" height="2.4" fill="#10f010"/><rect x="919.6" y="685.6" width="1.6" height="1.8" fill="none" stroke="#10f010" stroke-width="0.8"/><rect x="919.2" y="688.2" width="2.2" height="2.5" fill="#10f010"/><rect x="919.2" y="691.2" width="2.2" height="2.5" fill="#10f010"/><rect x="919.2" y="694.2" width="2.2" height="2.5" fill="#10f010"/><rect x="922.4" y="685.6" width="1.6" height="1.8" fill="none" stroke="#10f010" stroke-width="0.8"/><rect x="922.0" y="688.2" width="2.2" height="2.5" fill="#10f010"/><rect x="922.4" y="691.6" width="1.6" height="1.8" fill="none" stroke="#10f010" stroke-width="0.8"/><rect x="924.8" y="685.2" width="2.2" height="2.5" fill="#10f010"/><rect x="924.8" y="688.2" width="2.2" height="2.5" fill="#10f010"/><rect x="924.8" y="691.2" width="2.2" height="2.5" fill="#10f010"/><rect x="924.8" y="694.2" width="2.2" height="2.5" fill="#10f010"/><rect x="927.9" y="685.6" width="1.6" height="1.8" fill="none" stroke="#10f010" stroke-width="0.8"/><rect x="927.5" y="688.2" width="2.2" height="2.5" fill="#10f010"/><rect x="927.5" y="691.2" width="2.2" height="2.5" fill="#10f010"/><rect x="927.5" y="694.2" width="2.2" height="2.5" fill="#10f010"/><rect x="927.5" y="697.2" width="2.2" height="2.5" fill="#10f010"/><rect x="921.5" y="682.5" width="5.1" height="3.1" fill="none" stroke="#10f010" stroke-width="0.9"/><rect x="921.5" y="701.5" width="1.6" height="13.1" fill="none" stroke="#10f010" stroke-width="0.9"/><rect x="926.5" y="701.5" width="1.6" height="13.1" fill="none" stroke="#10f010" stroke-width="0.9"/><rect x="1008.2" y="681.3" width="7.5" height="8.4" fill="#10f010"/><rect x="978.3" y="687.3" width="10.3" height="2.4" fill="#10f010"/><rect x="981.0" y="681.3" width="7.5" height="8.4" fill="#10f010"/><rect x="1008.2" y="678.3" width="7.5" height="5.4" fill="#10f010"/><rect x="978.2" y="666.2" width="2.2" height="2.5" fill="#10f010"/><rect x="978.6" y="669.6" width="1.5" height="1.8" fill="none" stroke="#10f010" stroke-width="0.8"/><rect x="978.2" y="675.2" width="2.2" height="2.5" fill="#10f010"/><rect x="978.2" y="678.2" width="2.2" height="2.5" fill="#10f010"/><rect x="978.2" y="681.2" width="2.2" height="2.5" fill="#10f010"/><rect x="978.2" y="684.2" width="2.2" height="2.5" fill="#10f010"/><rect x="981.0" y="666.2" width="2.2" height="2.5" fill="#10f010"/><rect x="981.0" y="669.2" width="2.2" height="2.5" fill="#10f010"/><rect x="981.0" y="672.2" width="2.2" height="2.5" fill="#10f010"/><rect x="983.7" y="666.2" width="2.2" height="2.5" fill="#10f010"/><rect x="983.4" y="669.5" width="2.7" height="2.0" fill="#10f010" opacity="0.7"/><rect x="983.4" y="672.5" width="2.7" height="2.0" fill="#10f010" opacity="0.7"/><rect x="983.7" y="675.2" width="2.2" height="2.5" fill="#10f010"/><rect x="983.7" y="678.2" width="2.2" height="2.5" fill="#10f010"/><rect x="986.7" y="666.6" width="1.5" height="1.8" fill="none" stroke="#10f010" stroke-width="0.8"/><rect x="986.4" y="669.2" width="2.2" height="2.5" fill="#10f010"/><rect x="986.4" y="672.2" width="2.2" height="2.5" fill="#10f010"/><rect x="986.4" y="675.2" width="2.2" height="2.5" fill="#10f010"/><rect x="986.4" y="678.2" width="2.2" height="2.5" fill="#10f010"/><rect x="989.1" y="666.2" width="2.2" height="2.5" fill="#10f010"/><rect x="989.1" y="669.2" width="2.2" height="2.5" fill="#10f010"/><rect x="989.1" y="672.2" width="2.2" height="2.5" fill="#10f010"/><rect x="989.1" y="675.2" width="2.2" height="2.5" fill="#10f010"/><rect x="989.5" y="678.6" width="1.5" height="1.8" fill="none" stroke="#10f010" stroke-width="0.8"/><rect x="989.1" y="681.2" width="2.2" height="2.5" fill="#10f010"/><rect x="989.1" y="684.2" width="2.2" height="2.5" fill="#10f010"/><rect x="988.9" y="687.5" width="2.7" height="2.0" fill="#10f010" opacity="0.7"/><rect x="991.8" y="666.2" width="2.2" height="2.5" fill="#10f010"/><rect x="991.8" y="669.2" width="2.2" height="2.5" fill="#10f010"/><rect x="992.2" y="672.6" width="1.5" height="1.8" fill="none" stroke="#10f010" stroke-width="0.8"/><rect x="991.8" y="675.2" width="2.2" height="2.5" fill="#10f010"/><rect x="991.8" y="678.2" width="2.2" height="2.5" fill="#10f010"/><rect x="991.8" y="681.2" width="2.2" height="2.5" fill="#10f010"/><rect x="991.8" y="684.2" width="2.2" height="2.5" fill="#10f010"/><rect x="991.8" y="687.2" width="2.2" height="2.5" fill="#10f010"/><rect x="994.5" y="666.2" width="2.2" height="2.5" fill="#10f010"/><rect x="994.5" y="669.2" width="2.2" height="2.5" fill="#10f010"/><rect x="994.3" y="672.5" width="2.7" height="2.0" fill="#10f010" opacity="0.7"/><rect x="994.5" y="675.2" width="2.2" height="2.5" fill="#10f010"/><rect x="994.5" y="678.2" width="2.2" height="2.5" fill="#10f010"/><rect x="994.9" y="681.6" width="1.5" height="1.8" fill="none" stroke="#10f010" stroke-width="0.8"/><rect x="994.5" y="684.2" width="2.2" height="2.5" fill="#10f010"/><rect x="994.5" y="687.2" width="2.2" height="2.5" fill="#10f010"/><rect x="997.2" y="666.2" width="2.2" height="2.5" fill="#10f010"/><rect x="997.6" y="669.6" width="1.5" height="1.8" fill="none" stroke="#10f010" stroke-width="0.8"/><rect x="997.2" y="672.2" width="2.2" height="2.5" fill="#10f010"/><rect x="997.0" y="675.5" width="2.7" height="2.0" fill="#10f010" opacity="0.7"/><rect x="997.6" y="678.6" width="1.5" height="1.8" fill="none" stroke="#10f010" stroke-width="0.8"/><rect x="997.6" y="681.6" width="1.5" height="1.8" fill="none" stroke="#10f010" stroke-width="0.8"/><rect x="997.2" y="684.2" width="2.2" height="2.5" fill="#10f010"/><rect x="997.2" y="687.2" width="2.2" height="2.5" fill="#10f010"/><rect x="1000.0" y="666.2" width="2.2" height="2.5" fill="#10f010"/><rect x="1000.0" y="669.2" width="2.2" height="2.5" fill="#10f010"/><rect x="1000.0" y="672.2" width="2.2" height="2.5" fill="#10f010"/><rect x="1000.0" y="678.2" width="2.2" height="2.5" fill="#10f010"/><rect x="1000.0" y="681.2" width="2.2" height="2.5" fill="#10f010"/><rect x="1000.3" y="684.6" width="1.5" height="1.8" fill="none" stroke="#10f010" stroke-width="0.8"/><rect x="1000.3" y="687.6" width="1.5" height="1.8" fill="none" stroke="#10f010" stroke-width="0.8"/><rect x="1002.7" y="666.2" width="2.2" height="2.5" fill="#10f010"/><rect x="1002.7" y="669.2" width="2.2" height="2.5" fill="#10f010"/><rect x="1003.0" y="672.6" width="1.5" height="1.8" fill="none" stroke="#10f010" stroke-width="0.8"/><rect x="1002.7" y="675.2" width="2.2" height="2.5" fill="#10f010"/><rect x="1003.0" y="678.6" width="1.5" height="1.8" fill="none" stroke="#10f010" stroke-width="0.8"/><rect x="1002.7" y="681.2" width="2.2" height="2.5" fill="#10f010"/><rect x="1002.7" y="684.2" width="2.2" height="2.5" fill="#10f010"/><rect x="1002.7" y="687.2" width="2.2" height="2.5" fill="#10f010"/><rect x="1005.1" y="666.5" width="2.7" height="2.0" fill="#10f010" opacity="0.7"/><rect x="1005.4" y="669.2" width="2.2" height="2.5" fill="#10f010"/><rect x="1005.4" y="672.2" width="2.2" height="2.5" fill="#10f010"/><rect x="1005.4" y="675.2" width="2.2" height="2.5" fill="#10f010"/><rect x="1005.7" y="678.6" width="1.5" height="1.8" fill="none" stroke="#10f010" stroke-width="0.8"/><rect x="1005.4" y="681.2" width="2.2" height="2.5" fill="#10f010"/><rect x="1005.1" y="684.5" width="2.7" height="2.0" fill="#10f010" opacity="0.7"/><rect x="1005.4" y="687.2" width="2.2" height="2.5" fill="#10f010"/><rect x="1008.1" y="666.2" width="2.2" height="2.5" fill="#10f010"/><rect x="1008.1" y="669.2" width="2.2" height="2.5" fill="#10f010"/><rect x="1008.1" y="672.2" width="2.2" height="2.5" fill="#10f010"/><rect x="1008.1" y="675.2" width="2.2" height="2.5" fill="#10f010"/><rect x="1011.2" y="666.6" width="1.5" height="1.8" fill="none" stroke="#10f010" stroke-width="0.8"/><rect x="1010.8" y="669.2" width="2.2" height="2.5" fill="#10f010"/><rect x="1010.8" y="672.2" width="2.2" height="2.5" fill="#10f010"/><rect x="1010.8" y="675.2" width="2.2" height="2.5" fill="#10f010"/><rect x="1013.5" y="666.2" width="2.2" height="2.5" fill="#10f010"/><rect x="1013.5" y="669.2" width="2.2" height="2.5" fill="#10f010"/><rect x="1013.5" y="672.2" width="2.2" height="2.5" fill="#10f010"/><rect x="1013.5" y="675.2" width="2.2" height="2.5" fill="#10f010"/><rect x="998.7" y="710.4" width="5.1" height="2.3" fill="#10f010"/><rect x="995.9" y="698.9" width="8.0" height="5.2" fill="#10f010"/><rect x="987.2" y="690.2" width="2.4" height="2.4" fill="#10f010"/><rect x="987.2" y="693.1" width="2.4" height="2.4" fill="#10f010"/><rect x="987.2" y="696.0" width="2.4" height="2.4" fill="#10f010"/><rect x="987.2" y="698.9" width="2.4" height="2.4" fill="#10f010"/><rect x="987.2" y="701.8" width="2.4" height="2.4" fill="#10f010"/><rect x="987.2" y="704.6" width="2.4" height="2.4" fill="#10f010"/><rect x="987.2" y="707.5" width="2.4" height="2.4" fill="#10f010"/><rect x="987.0" y="710.6" width="2.9" height="1.9" fill="#10f010" opacity="0.7"/><rect x="990.5" y="690.6" width="1.7" height="1.7" fill="none" stroke="#10f010" stroke-width="0.8"/><rect x="990.1" y="693.1" width="2.4" height="2.4" fill="#10f010"/><rect x="990.1" y="696.0" width="2.4" height="2.4" fill="#10f010"/><rect x="990.1" y="698.9" width="2.4" height="2.4" fill="#10f010"/><rect x="990.1" y="701.8" width="2.4" height="2.4" fill="#10f010"/><rect x="990.1" y="704.6" width="2.4" height="2.4" fill="#10f010"/><rect x="990.1" y="707.5" width="2.4" height="2.4" fill="#10f010"/><rect x="990.1" y="710.4" width="2.4" height="2.4" fill="#10f010"/><rect x="993.0" y="693.1" width="2.4" height="2.4" fill="#10f010"/><rect x="993.0" y="696.0" width="2.4" height="2.4" fill="#10f010"/><rect x="993.0" y="698.9" width="2.4" height="2.4" fill="#10f010"/><rect x="993.3" y="702.1" width="1.7" height="1.7" fill="none" stroke="#10f010" stroke-width="0.8"/><rect x="993.0" y="704.6" width="2.4" height="2.4" fill="#10f010"/><rect x="993.0" y="707.5" width="2.4" height="2.4" fill="#10f010"/><rect x="993.0" y="710.4" width="2.4" height="2.4" fill="#10f010"/><rect x="995.8" y="690.2" width="2.4" height="2.4" fill="#10f010"/><rect x="995.8" y="693.1" width="2.4" height="2.4" fill="#10f010"/><rect x="996.2" y="705.0" width="1.7" height="1.7" fill="none" stroke="#10f010" stroke-width="0.8"/><rect x="996.2" y="707.9" width="1.7" height="1.7" fill="none" stroke="#10f010" stroke-width="0.8"/><rect x="995.8" y="710.4" width="2.4" height="2.4" fill="#10f010"/><rect x="998.7" y="690.2" width="2.4" height="2.4" fill="#10f010"/><rect x="998.7" y="693.1" width="2.4" height="2.4" fill="#10f010"/><rect x="998.4" y="696.2" width="2.9" height="1.9" fill="#10f010" opacity="0.7"/><rect x="998.7" y="704.6" width="2.4" height="2.4" fill="#10f010"/><rect x="998.7" y="707.5" width="2.4" height="2.4" fill="#10f010"/><rect x="1001.5" y="690.2" width="2.4" height="2.4" fill="#10f010"/><rect x="1001.5" y="693.1" width="2.4" height="2.4" fill="#10f010"/><rect x="1001.3" y="696.2" width="2.9" height="1.9" fill="#10f010" opacity="0.7"/><rect x="1001.9" y="705.0" width="1.7" height="1.7" fill="none" stroke="#10f010" stroke-width="0.8"/><rect x="1001.9" y="707.9" width="1.7" height="1.7" fill="none" stroke="#10f010" stroke-width="0.8"/><rect x="1004.4" y="693.1" width="2.4" height="2.4" fill="#10f010"/><rect x="1004.4" y="696.0" width="2.4" height="2.4" fill="#10f010"/><rect x="1004.4" y="698.9" width="2.4" height="2.4" fill="#10f010"/><rect x="1004.4" y="701.8" width="2.4" height="2.4" fill="#10f010"/><rect x="1004.4" y="704.6" width="2.4" height="2.4" fill="#10f010"/><rect x="1004.1" y="707.8" width="2.9" height="1.9" fill="#10f010" opacity="0.7"/><rect x="1004.7" y="710.7" width="1.7" height="1.7" fill="none" stroke="#10f010" stroke-width="0.8"/><rect x="978.7" y="696.7" width="10.6" height="4.6" fill="none" stroke="#10f010" stroke-width="0.9"/><rect x="978.2" y="690.2" width="2.5" height="2.5" fill="#10f010"/><rect x="978.2" y="693.2" width="2.5" height="2.5" fill="#10f010"/><rect x="981.2" y="690.2" width="2.5" height="2.5" fill="#10f010"/><rect x="981.2" y="693.2" width="2.5" height="2.5" fill="#10f010"/><rect x="984.2" y="690.2" width="2.5" height="2.5" fill="#10f010"/><rect x="966.3" y="684.0" width="12.6" height="4.9" fill="#10f010"/><rect x="966.2" y="681.2" width="2.8" height="2.2" fill="#10f010"/><rect x="966.0" y="689.8" width="3.3" height="1.8" fill="#10f010" opacity="0.7"/><rect x="966.2" y="692.2" width="2.8" height="2.2" fill="#10f010"/><rect x="966.2" y="695.0" width="2.8" height="2.2" fill="#10f010"/><rect x="966.6" y="698.1" width="2.1" height="1.6" fill="none" stroke="#10f010" stroke-width="0.8"/><rect x="966.2" y="700.5" width="2.8" height="2.2" fill="#10f010"/><rect x="966.2" y="703.2" width="2.8" height="2.2" fill="#10f010"/><rect x="966.2" y="708.8" width="2.8" height="2.2" fill="#10f010"/><rect x="966.2" y="711.5" width="2.8" height="2.2" fill="#10f010"/><rect x="969.9" y="681.6" width="2.1" height="1.6" fill="none" stroke="#10f010" stroke-width="0.8"/><rect x="969.5" y="689.5" width="2.8" height="2.2" fill="#10f010"/><rect x="969.5" y="692.2" width="2.8" height="2.2" fill="#10f010"/><rect x="969.5" y="695.0" width="2.8" height="2.2" fill="#10f010"/><rect x="969.5" y="697.8" width="2.8" height="2.2" fill="#10f010"/><rect x="969.5" y="700.5" width="2.8" height="2.2" fill="#10f010"/><rect x="969.5" y="703.2" width="2.8" height="2.2" fill="#10f010"/><rect x="969.5" y="706.0" width="2.8" height="2.2" fill="#10f010"/><rect x="969.5" y="708.8" width="2.8" height="2.2" fill="#10f010"/><rect x="969.3" y="711.8" width="3.3" height="1.8" fill="#10f010" opacity="0.7"/><rect x="967.0" y="668.0" width="2.0" height="4.0" fill="#10f010"/><rect x="1020.3" y="671.7" width="10.8" height="5.8" fill="#10f010"/><rect x="1020.2" y="665.2" width="2.4" height="2.7" fill="#10f010"/><rect x="1020.2" y="668.5" width="2.4" height="2.7" fill="#10f010"/><rect x="1020.2" y="678.0" width="2.4" height="2.7" fill="#10f010"/><rect x="1023.1" y="665.2" width="2.4" height="2.7" fill="#10f010"/><rect x="1023.1" y="668.5" width="2.4" height="2.7" fill="#10f010"/><rect x="1023.1" y="678.0" width="2.4" height="2.7" fill="#10f010"/><rect x="1026.0" y="665.2" width="2.4" height="2.7" fill="#10f010"/><rect x="1026.0" y="668.5" width="2.4" height="2.7" fill="#10f010"/><rect x="1026.0" y="678.0" width="2.4" height="2.7" fill="#10f010"/><rect x="1029.2" y="665.6" width="1.7" height="2.0" fill="none" stroke="#10f010" stroke-width="0.8"/><rect x="1028.8" y="668.5" width="2.4" height="2.7" fill="#10f010"/><rect x="1028.8" y="678.0" width="2.4" height="2.7" fill="#10f010"/><rect x="1031.7" y="665.2" width="2.4" height="2.7" fill="#10f010"/><rect x="1032.0" y="668.8" width="1.7" height="2.0" fill="none" stroke="#10f010" stroke-width="0.8"/><rect x="1031.7" y="671.6" width="2.4" height="2.7" fill="#10f010"/><rect x="1031.7" y="674.9" width="2.4" height="2.7" fill="#10f010"/><rect x="1031.7" y="678.0" width="2.4" height="2.7" fill="#10f010"/><rect x="1034.3" y="665.5" width="2.9" height="2.2" fill="#10f010" opacity="0.7"/><rect x="1034.5" y="668.5" width="2.4" height="2.7" fill="#10f010"/><rect x="1034.5" y="671.6" width="2.4" height="2.7" fill="#10f010"/><rect x="1034.5" y="674.9" width="2.4" height="2.7" fill="#10f010"/><rect x="1034.3" y="678.3" width="2.9" height="2.2" fill="#10f010" opacity="0.7"/><rect x="1037.4" y="665.2" width="2.4" height="2.7" fill="#10f010"/><rect x="1037.1" y="668.7" width="2.9" height="2.2" fill="#10f010" opacity="0.7"/><rect x="1037.4" y="671.6" width="2.4" height="2.7" fill="#10f010"/><rect x="1037.4" y="674.9" width="2.4" height="2.7" fill="#10f010"/><rect x="1037.1" y="678.3" width="2.9" height="2.2" fill="#10f010" opacity="0.7"/><rect x="1023.0" y="655.0" width="5.0" height="5.0" fill="#10f010"/><rect x="1026.0" y="659.0" width="5.0" height="5.0" fill="#10f010"/><rect x="1028.0" y="663.0" width="5.0" height="5.0" fill="#10f010"/><rect x="1024.5" y="662.5" width="2.1" height="3.1" fill="none" stroke="#10f010" stroke-width="0.9"/><rect x="1026.3" y="686.3" width="5.4" height="2.4" fill="#10f010"/><rect x="1026.2" y="683.2" width="2.5" height="2.5" fill="#10f010"/><rect x="1026.2" y="689.2" width="2.5" height="2.5" fill="#10f010"/><rect x="1026.2" y="692.2" width="2.5" height="2.5" fill="#10f010"/><rect x="1029.2" y="683.2" width="2.5" height="2.5" fill="#10f010"/><rect x="1029.2" y="689.2" width="2.5" height="2.5" fill="#10f010"/><rect x="1029.2" y="692.2" width="2.5" height="2.5" fill="#10f010"/><rect x="1014.0" y="698.0" width="16.0" height="3.0" fill="#10f010"/><rect x="1014.0" y="706.0" width="15.0" height="3.0" fill="#10f010"/><rect x="1016.0" y="709.0" width="6.0" height="3.0" fill="#10f010"/><rect x="1034.5" y="585.0" width="3.5" height="11.0" fill="#10f010"/><rect x="1031.3" y="588.5" width="9.9" height="4.0" fill="#10f010"/><rect x="1032.0" y="586.0" width="2.0" height="2.0" fill="#10f010"/><rect x="1039.0" y="586.0" width="2.0" height="2.0" fill="#10f010"/><rect x="1032.0" y="593.0" width="2.0" height="2.0" fill="#10f010"/><rect x="1039.0" y="593.0" width="2.0" height="2.0" fill="#10f010"/><rect x="1034.7" y="602.5" width="10.2" height="11.9" fill="none" stroke="#10f010" stroke-width="0.9"/><rect x="1037.5" y="605.5" width="5.1" height="6.1" fill="none" stroke="#10f010" stroke-width="0.9"/><rect x="1046.4" y="603.5" width="1.7" height="10.1" fill="none" stroke="#10f010" stroke-width="0.9"/><rect x="1030.5" y="574.5" width="2.1" height="2.1" fill="none" stroke="#10f010" stroke-width="0.9"/><rect x="1041.5" y="574.5" width="1.1" height="2.1" fill="none" stroke="#10f010" stroke-width="0.9"/><rect x="1038.0" y="631.0" width="3.0" height="7.0" fill="#10f010"/><rect x="1038.5" y="643.5" width="2.1" height="7.1" fill="none" stroke="#10f010" stroke-width="0.9"/><rect x="1031.0" y="645.0" width="4.0" height="3.0" fill="#10f010"/><rect x="1031.5" y="603.5" width="2.1" height="6.1" fill="none" stroke="#10f010" stroke-width="0.9"/><rect x="644.5" y="640.5" width="24.1" height="25.1" fill="none" stroke="#10f010" stroke-width="0.9"/><rect x="647.0" y="643.0" width="19.1" height="20.1" fill="none" stroke="#10f010" stroke-width="0.9"/><rect x="1043.5" y="589.8" width="21" height="6.5" rx="3" fill="none" stroke="#10f010" stroke-width="1"/><rect x="1046" y="591.8" width="17" height="2.4" fill="none" stroke="#10f010" stroke-width="0.8"/><rect x="1043.5" y="620.5" width="21" height="7" rx="3" fill="none" stroke="#10f010" stroke-width="1"/><rect x="1046" y="622.8" width="17" height="2.4" fill="none" stroke="#10f010" stroke-width="0.8"/><path d="M1043 596 L1040 600 V604" fill="none" stroke="#10f010" stroke-width="0.9"/><path d="M1040 614 V619 L1043 621" fill="none" stroke="#10f010" stroke-width="0.9"/><rect x="826.0" y="696.5" width="1.6" height="2.6" fill="#10f010"/><rect x="828.3" y="696.5" width="1.6" height="2.6" fill="#10f010"/><rect x="830.6" y="696.5" width="1.6" height="2.6" fill="#10f010"/><rect x="832.9" y="696.5" width="1.6" height="2.6" fill="#10f010"/><rect x="835.2" y="696.5" width="1.6" height="2.6" fill="#10f010"/><rect x="837.5" y="696.5" width="1.6" height="2.6" fill="#10f010"/><rect x="839.8" y="696.5" width="1.6" height="2.6" fill="#10f010"/><rect x="842.1" y="696.5" width="1.6" height="2.6" fill="#10f010"/><rect x="844.4" y="696.5" width="1.6" height="2.6" fill="#10f010"/><rect x="846.7" y="696.5" width="1.6" height="2.6" fill="#10f010"/><rect x="849.0" y="696.5" width="1.6" height="2.6" fill="#10f010"/><rect x="851.3" y="696.5" width="1.6" height="2.6" fill="#10f010"/><rect x="685.3" y="610.0" width="2.6" height="1.5" fill="#10f010"/><rect x="685.3" y="612.3" width="2.6" height="1.5" fill="#10f010"/><rect x="685.3" y="614.6" width="2.6" height="1.5" fill="#10f010"/><rect x="685.3" y="616.9" width="2.6" height="1.5" fill="#10f010"/><rect x="685.3" y="619.2" width="2.6" height="1.5" fill="#10f010"/><rect x="685.3" y="621.5" width="2.6" height="1.5" fill="#10f010"/><rect x="685.3" y="623.8" width="2.6" height="1.5" fill="#10f010"/><rect x="685.3" y="626.1" width="2.6" height="1.5" fill="#10f010"/><g font-family="Liberation Mono" font-size="6.3" fill="#40e040" opacity="0.75"><text x="867" y="600.5">84016530001</text><text x="867" y="608">REV A</text><text x="867" y="615.5">PVT 1</text><text x="867" y="623">CAD SIDE 1</text></g><g font-family="Liberation Mono" font-size="6.4" fill="#7a7a7a" opacity="0.75"><text x="856" y="242">ART FILM - SMT</text><text x="856" y="757.5">ART FILM - SMT</text></g><circle cx="1061.5" cy="826.5" r="1.3" fill="#e04080"/></svg><!--/PCB-->

<div class="a" style="left:0;top:111px;width:1px;height:725px;background:#8a9498"></div>
<!-- status bar -->
<div class="a" style="left:0;top:836px;width:1521px;height:20px;background:#45678c;border-top:1px solid #3e6078;border-bottom:1px solid #2e6482"></div>
<div class="a" style="left:0;top:856px;width:1521px;height:3px;background:#6ec6e2"></div>

<div class="a mono" style="left:0;top:841px;color:#101828">Version:1.0.0.52</div>
<div class="a mono" style="left:948px;top:841px;color:#fff">Current [XT1621_XT1622_XT1624_XT1625_XT1626_XT1640_XT1641_XT1642_XT1643_XT1644_L3_Board_Layout]</div>
<!-- right vscroll -->
<div class="a" style="left:1505px;top:161px;width:15px;height:673px;background:#fff;border-left:1px solid #d8d8d8"></div>
<div class="a" style="left:1505px;top:161px;width:15px;height:16px;background:#fff;border-bottom:1px solid #c8c8c8"></div>
<svg class="a" style="left:1508px;top:166px" width="11" height="9"><path d="M1.5 6.5 L5.5 2.5 L9.5 6.5" fill="none" stroke="#404040" stroke-width="1.3"/></svg>
<div class="a" style="left:1505px;top:820px;width:15px;height:14px;background:#fff;border-top:1px solid #c8c8c8"></div>
<svg class="a" style="left:1508px;top:823px" width="11" height="9"><path d="M1.5 2.5 L5.5 6.5 L9.5 2.5" fill="none" stroke="#404040" stroke-width="1.3"/></svg>
<div class="a" style="left:1505px;top:206px;width:15px;height:27px;background:#dcdcdc;border-top:1px solid #a8a8a8;border-bottom:1px solid #a8a8a8"></div>
<div class="a" style="left:1509px;top:215px;width:7px;height:2px;background:#505050;box-shadow:0 3px 0 #505050,0 6px 0 #505050"></div>
</body></html>
